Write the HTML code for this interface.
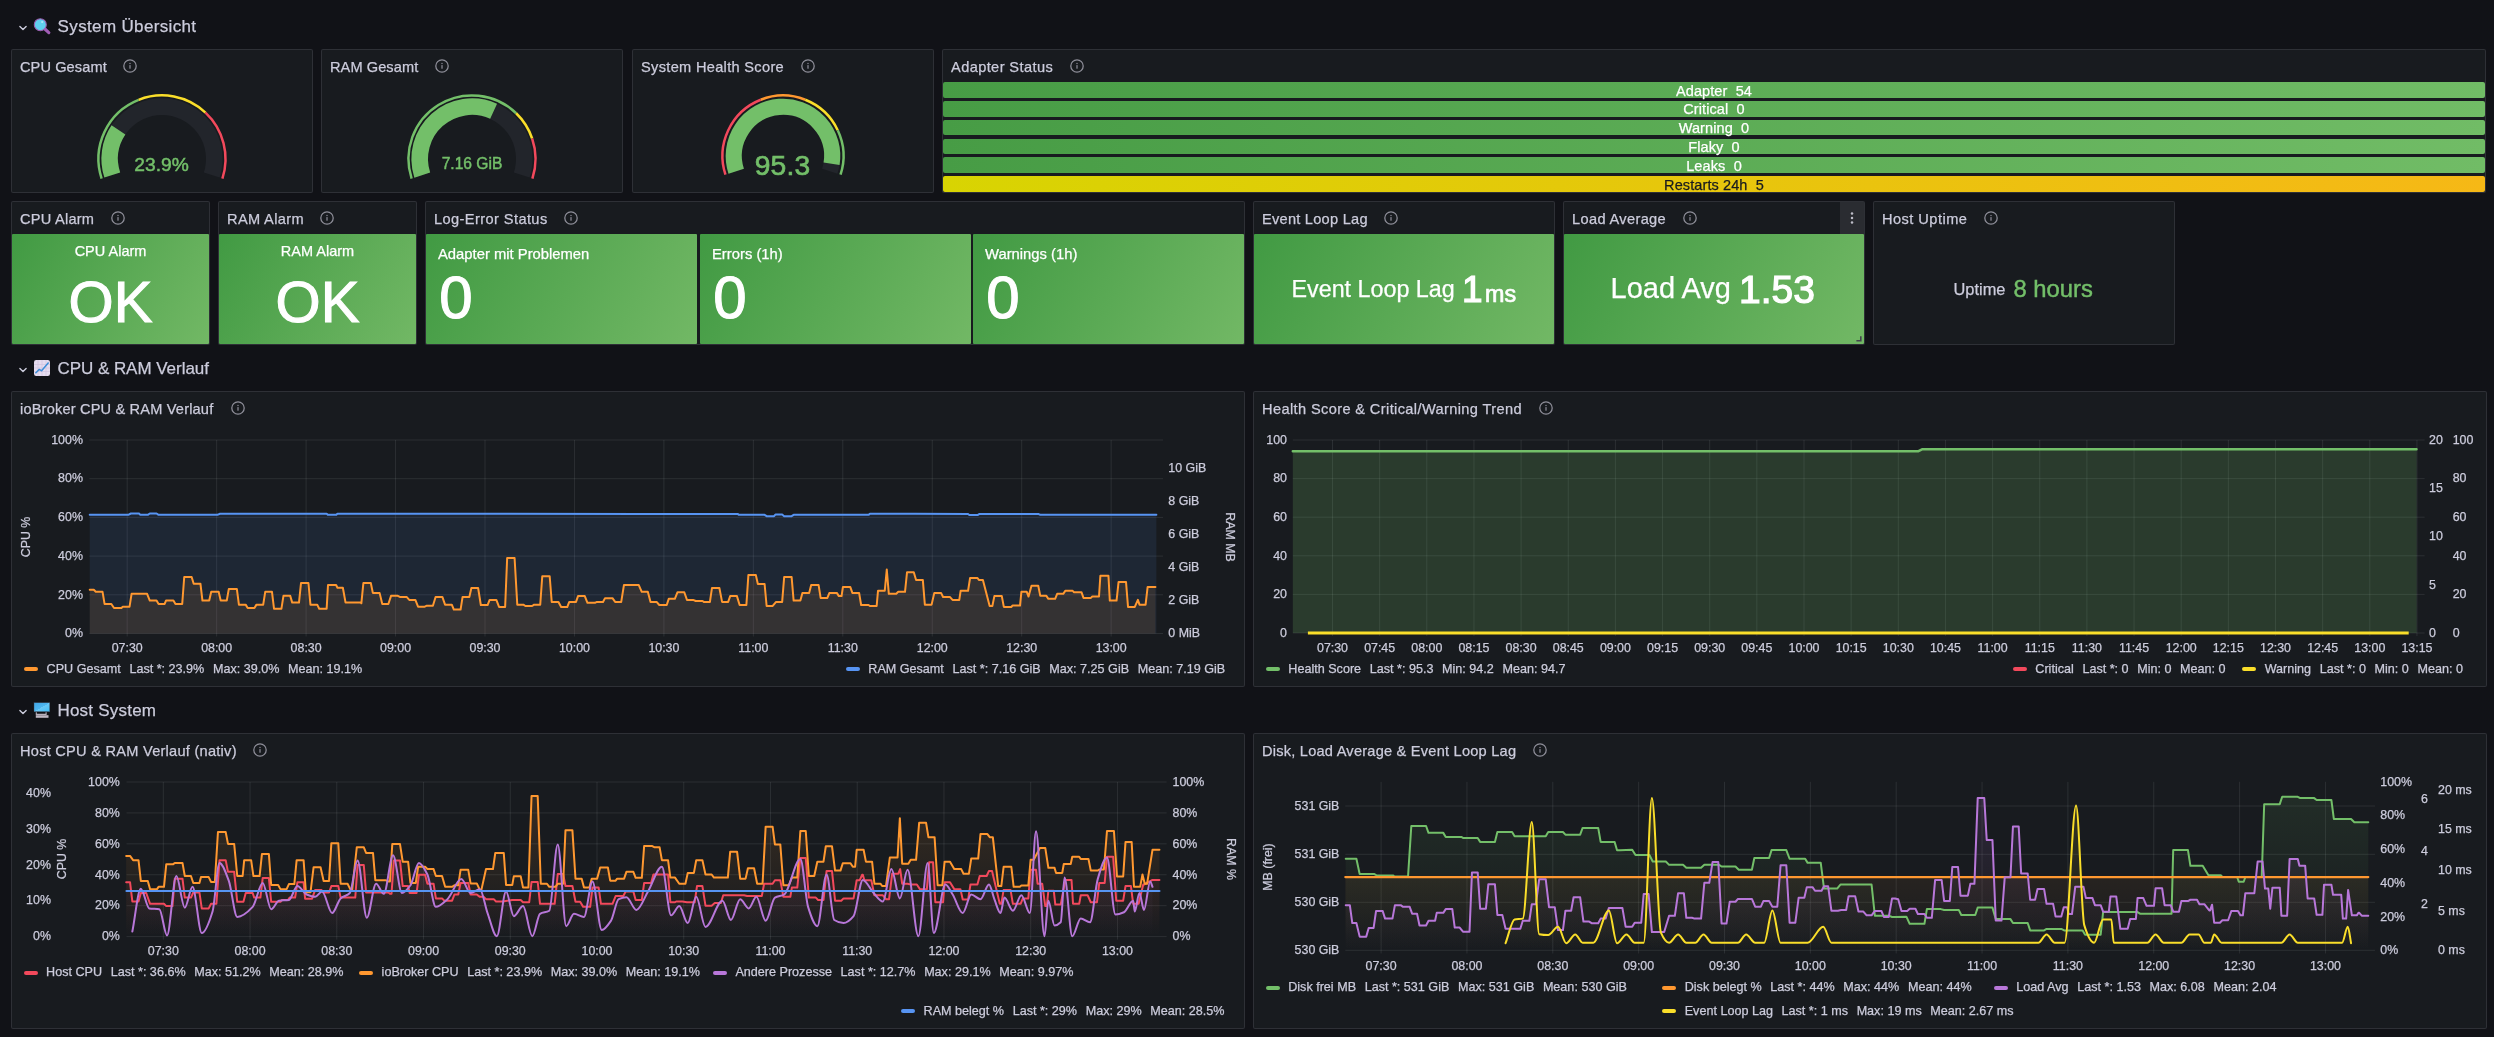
<!DOCTYPE html><html><head><meta charset="utf-8"><style>html,body{margin:0;padding:0}body{background:#111217;width:2494px;height:1037px;overflow:hidden;position:relative;font-family:"Liberation Sans",sans-serif}.t{position:absolute;white-space:pre;line-height:1;-webkit-text-stroke-width:0.25px}#root{position:absolute;left:0;top:0;width:2494px;height:1037px;will-change:transform}.a{position:absolute}.panel{position:absolute;box-sizing:border-box;background:#181b1f;border:1px solid rgba(204,204,220,0.12);border-radius:2px}</style></head><body><div id="root"><svg class="a" style="left:17px;top:22.6px" width="12" height="10" viewBox="0 0 12 10"><path d="M2.9 3.4 L6 6.5 L9.1 3.4" fill="none" stroke="#ccccdc" stroke-width="1.4" stroke-linecap="round" stroke-linejoin="round"/></svg><svg class="a" style="left:32px;top:17px" width="20" height="18" viewBox="0 0 20 18"><line x1="12.6" y1="11.8" x2="16.8" y2="15.6" stroke="#a05cb5" stroke-width="3.2" stroke-linecap="round"/><circle cx="8.3" cy="7.7" r="6.0" fill="#5fcfee" stroke="#9b5fb0" stroke-width="1.1"/><ellipse cx="10.2" cy="5.0" rx="1.2" ry="0.8" fill="#c9f1ff"/></svg><div class="t" style="top:17.91px;font-size:17px;color:#ccccdc;letter-spacing:0.353px;left:57.60px;">System Übersicht</div><svg class="a" style="left:17px;top:364.8px" width="12" height="10" viewBox="0 0 12 10"><path d="M2.9 3.4 L6 6.5 L9.1 3.4" fill="none" stroke="#ccccdc" stroke-width="1.4" stroke-linecap="round" stroke-linejoin="round"/></svg><svg class="a" style="left:33px;top:359px" width="18" height="18" viewBox="0 0 18 18"><rect x="1" y="1" width="16" height="16" rx="2.2" fill="#e6dcef"/><path d="M1 5.5H17M1 9H17M1 12.5H17M5 1V17M9 1V17M13 1V17" stroke="#cdbfdc" stroke-width="0.6"/><path d="M2.4 14.2 L6.3 10.4 L8.6 11.8 L15.6 3.6" fill="none" stroke="#3e8ed8" stroke-width="1.5" stroke-linejoin="round"/></svg><div class="t" style="top:360.11px;font-size:17px;color:#ccccdc;letter-spacing:-0.032px;left:57.40px;">CPU &amp; RAM Verlauf</div><svg class="a" style="left:17px;top:706.8px" width="12" height="10" viewBox="0 0 12 10"><path d="M2.9 3.4 L6 6.5 L9.1 3.4" fill="none" stroke="#ccccdc" stroke-width="1.4" stroke-linecap="round" stroke-linejoin="round"/></svg><svg class="a" style="left:33px;top:701px" width="18" height="18" viewBox="0 0 18 18"><defs><linearGradient id="scr" x1="0" y1="0" x2="1" y2="1"><stop offset="0" stop-color="#41a6e6"/><stop offset="0.5" stop-color="#4db6f0"/><stop offset="0.5" stop-color="#6cc8f6"/><stop offset="1" stop-color="#3ec0fa"/></linearGradient></defs><rect x="1" y="1.7" width="15.8" height="9" fill="url(#scr)" stroke="#40404c" stroke-width="0.4"/><path d="M3.3 11.3 V13.4 H13.1 V11.3" fill="none" stroke="#b8b0bc" stroke-width="1.1"/><rect x="2.8" y="14.2" width="12.7" height="2.6" fill="#bfb7c3"/></svg><div class="t" style="top:702.11px;font-size:17px;color:#ccccdc;letter-spacing:0.224px;left:57.40px;">Host System</div><div class="panel" style="left:11px;top:49px;width:302px;height:144px"></div><div class="t" style="top:59.64px;font-size:14.6px;color:#ccccdc;letter-spacing:0.081px;left:20.00px;">CPU Gesamt</div><svg class="a" style="left:122.0px;top:58.0px" width="16" height="16" viewBox="0 0 16 16"><circle cx="8" cy="8" r="6.2" fill="none" stroke="#8f8f9a" stroke-width="1.25"/><rect x="7.4" y="7.1" width="1.2" height="3.6" fill="#8f8f9a"/><rect x="7.4" y="4.9" width="1.2" height="1.2" fill="#8f8f9a"/></svg><div class="panel" style="left:321px;top:49px;width:302px;height:144px"></div><div class="t" style="top:59.64px;font-size:14.6px;color:#ccccdc;letter-spacing:0.069px;left:330.00px;">RAM Gesamt</div><svg class="a" style="left:433.6px;top:58.0px" width="16" height="16" viewBox="0 0 16 16"><circle cx="8" cy="8" r="6.2" fill="none" stroke="#8f8f9a" stroke-width="1.25"/><rect x="7.4" y="7.1" width="1.2" height="3.6" fill="#8f8f9a"/><rect x="7.4" y="4.9" width="1.2" height="1.2" fill="#8f8f9a"/></svg><div class="panel" style="left:632px;top:49px;width:302px;height:144px"></div><div class="t" style="top:59.64px;font-size:14.6px;color:#ccccdc;letter-spacing:0.312px;left:641.00px;">System Health Score</div><svg class="a" style="left:800.0px;top:58.0px" width="16" height="16" viewBox="0 0 16 16"><circle cx="8" cy="8" r="6.2" fill="none" stroke="#8f8f9a" stroke-width="1.25"/><rect x="7.4" y="7.1" width="1.2" height="3.6" fill="#8f8f9a"/><rect x="7.4" y="4.9" width="1.2" height="1.2" fill="#8f8f9a"/></svg><div class="panel" style="left:942px;top:49px;width:1544px;height:144px"></div><div class="t" style="top:59.64px;font-size:14.6px;color:#ccccdc;letter-spacing:0.396px;left:951.00px;">Adapter Status</div><svg class="a" style="left:1069.0px;top:58.0px" width="16" height="16" viewBox="0 0 16 16"><circle cx="8" cy="8" r="6.2" fill="none" stroke="#8f8f9a" stroke-width="1.25"/><rect x="7.4" y="7.1" width="1.2" height="3.6" fill="#8f8f9a"/><rect x="7.4" y="4.9" width="1.2" height="1.2" fill="#8f8f9a"/></svg><svg class="a" style="left:0;top:0" width="2494" height="300"><path d="M112.26 175.06 A52.3 52.3 0 1 1 211.74 175.06" fill="none" stroke="#22252b" stroke-width="16.6"/><path d="M112.26 175.06 A52.3 52.3 0 0 1 118.45 129.94" fill="none" stroke="#73bf69" stroke-width="16.6"/><path d="M101.61 178.52 A63.5 63.5 0 0 1 138.62 99.86" fill="none" stroke="#73bf69" stroke-width="2.5"/><path d="M138.62 99.86 A63.5 63.5 0 0 1 205.47 112.61" fill="none" stroke="#fade2a" stroke-width="2.5"/><path d="M205.47 112.61 A63.5 63.5 0 0 1 222.39 178.52" fill="none" stroke="#f2495c" stroke-width="2.5"/></svg><div class="t" style="top:154.74px;font-size:19.2px;color:#73bf69;left:-438.50px;width:1200px;text-align:center;-webkit-text-stroke-width:0.5px;">23.9%</div><svg class="a" style="left:0;top:0" width="2494" height="300"><path d="M422.26 175.06 A52.3 52.3 0 1 1 521.74 175.06" fill="none" stroke="#22252b" stroke-width="16.6"/><path d="M422.26 175.06 A52.3 52.3 0 0 1 493.61 111.27" fill="none" stroke="#73bf69" stroke-width="16.6"/><path d="M411.61 178.52 A63.5 63.5 0 0 1 516.16 113.27" fill="none" stroke="#73bf69" stroke-width="2.5"/><path d="M516.16 113.27 A63.5 63.5 0 0 1 532.14 138.52" fill="none" stroke="#fade2a" stroke-width="2.5"/><path d="M532.14 138.52 A63.5 63.5 0 0 1 532.39 178.52" fill="none" stroke="#f2495c" stroke-width="2.5"/></svg><div class="t" style="top:155.59px;font-size:15.6px;color:#73bf69;left:-128.00px;width:1200px;text-align:center;-webkit-text-stroke-width:0.45px;">7.16 GiB</div><svg class="a" style="left:0;top:0" width="2494" height="300"><path d="M736.21 171.20 A49.2 49.2 0 1 1 829.79 171.20" fill="none" stroke="#22252b" stroke-width="16.199999999999996"/><path d="M736.21 171.20 A49.2 49.2 0 1 1 831.57 163.82" fill="none" stroke="#73bf69" stroke-width="16.199999999999996"/><path d="M725.46 174.70 A60.5 60.5 0 0 1 760.73 99.75" fill="none" stroke="#f2495c" stroke-width="2.5"/><path d="M760.73 99.75 A60.5 60.5 0 0 1 805.27 99.75" fill="none" stroke="#ff9830" stroke-width="2.5"/><path d="M805.27 99.75 A60.5 60.5 0 0 1 837.74 130.24" fill="none" stroke="#fade2a" stroke-width="2.5"/><path d="M837.74 130.24 A60.5 60.5 0 0 1 840.54 174.70" fill="none" stroke="#73bf69" stroke-width="2.5"/></svg><div class="t" style="top:150.72px;font-size:28.2px;color:#73bf69;letter-spacing:0.200px;left:182.50px;width:1200px;text-align:center;-webkit-text-stroke-width:0.7px;">95.3</div><div class="a" style="left:943px;top:82.00px;width:1542px;height:15.8px;border-radius:2px;background:linear-gradient(90deg,#479c45,#71bc66)"></div><div class="t" style="top:83.62px;font-size:14.5px;color:#ffffff;letter-spacing:0.100px;left:1114.00px;width:1200px;text-align:center;">Adapter  54</div><div class="a" style="left:943px;top:100.84px;width:1542px;height:15.8px;border-radius:2px;background:linear-gradient(90deg,#479c45,#71bc66)"></div><div class="t" style="top:102.46px;font-size:14.5px;color:#ffffff;letter-spacing:0.100px;left:1114.00px;width:1200px;text-align:center;">Critical  0</div><div class="a" style="left:943px;top:119.68px;width:1542px;height:15.8px;border-radius:2px;background:linear-gradient(90deg,#479c45,#71bc66)"></div><div class="t" style="top:121.30px;font-size:14.5px;color:#ffffff;letter-spacing:0.100px;left:1114.00px;width:1200px;text-align:center;">Warning  0</div><div class="a" style="left:943px;top:138.52px;width:1542px;height:15.8px;border-radius:2px;background:linear-gradient(90deg,#479c45,#71bc66)"></div><div class="t" style="top:140.14px;font-size:14.5px;color:#ffffff;letter-spacing:0.100px;left:1114.00px;width:1200px;text-align:center;">Flaky  0</div><div class="a" style="left:943px;top:157.36px;width:1542px;height:15.8px;border-radius:2px;background:linear-gradient(90deg,#479c45,#71bc66)"></div><div class="t" style="top:158.98px;font-size:14.5px;color:#ffffff;letter-spacing:0.100px;left:1114.00px;width:1200px;text-align:center;">Leaks  0</div><div class="a" style="left:943px;top:176.20px;width:1542px;height:15.8px;border-radius:2px;background:linear-gradient(90deg,#d8d402,#f6b816)"></div><div class="t" style="top:177.82px;font-size:14.5px;color:#181b1f;letter-spacing:0.100px;left:1114.00px;width:1200px;text-align:center;">Restarts 24h  5</div><div class="panel" style="left:11px;top:201px;width:199px;height:144px"></div><div class="t" style="top:211.64px;font-size:14.6px;color:#ccccdc;letter-spacing:0.229px;left:20.00px;">CPU Alarm</div><svg class="a" style="left:109.9px;top:210.0px" width="16" height="16" viewBox="0 0 16 16"><circle cx="8" cy="8" r="6.2" fill="none" stroke="#8f8f9a" stroke-width="1.25"/><rect x="7.4" y="7.1" width="1.2" height="3.6" fill="#8f8f9a"/><rect x="7.4" y="4.9" width="1.2" height="1.2" fill="#8f8f9a"/></svg><div class="a" style="left:12px;top:234px;width:197px;height:110px;border-radius:1px;background:linear-gradient(120deg,#419a43,#72b865)"></div><div class="t" style="top:243.62px;font-size:14.5px;color:#ffffff;left:-489.50px;width:1200px;text-align:center;">CPU Alarm</div><div class="t" style="top:272.89px;font-size:58px;color:#ffffff;left:-489.50px;width:1200px;text-align:center;-webkit-text-stroke-width:1.1px;">OK</div><div class="panel" style="left:218px;top:201px;width:199px;height:144px"></div><div class="t" style="top:211.64px;font-size:14.6px;color:#ccccdc;letter-spacing:0.350px;left:227.00px;">RAM Alarm</div><svg class="a" style="left:319.0px;top:210.0px" width="16" height="16" viewBox="0 0 16 16"><circle cx="8" cy="8" r="6.2" fill="none" stroke="#8f8f9a" stroke-width="1.25"/><rect x="7.4" y="7.1" width="1.2" height="3.6" fill="#8f8f9a"/><rect x="7.4" y="4.9" width="1.2" height="1.2" fill="#8f8f9a"/></svg><div class="a" style="left:219px;top:234px;width:197px;height:110px;border-radius:1px;background:linear-gradient(120deg,#419a43,#72b865)"></div><div class="t" style="top:243.62px;font-size:14.5px;color:#ffffff;left:-282.50px;width:1200px;text-align:center;">RAM Alarm</div><div class="t" style="top:272.89px;font-size:58px;color:#ffffff;left:-282.50px;width:1200px;text-align:center;-webkit-text-stroke-width:1.1px;">OK</div><div class="panel" style="left:425px;top:201px;width:820px;height:144px"></div><div class="t" style="top:211.64px;font-size:14.6px;color:#ccccdc;letter-spacing:0.408px;left:434.00px;">Log-Error Status</div><svg class="a" style="left:562.7px;top:210.0px" width="16" height="16" viewBox="0 0 16 16"><circle cx="8" cy="8" r="6.2" fill="none" stroke="#8f8f9a" stroke-width="1.25"/><rect x="7.4" y="7.1" width="1.2" height="3.6" fill="#8f8f9a"/><rect x="7.4" y="4.9" width="1.2" height="1.2" fill="#8f8f9a"/></svg><div class="a" style="left:426px;top:234px;width:270.5px;height:110px;border-radius:1px;background:linear-gradient(120deg,#419a43,#72b865)"></div><div class="t" style="top:247.47px;font-size:14.8px;color:#ffffff;left:438.00px;">Adapter mit Problemen</div><div class="t" style="top:267.50px;font-size:60px;color:#ffffff;left:439.30px;-webkit-text-stroke-width:1.1px;">0</div><div class="a" style="left:700px;top:234px;width:270.5px;height:110px;border-radius:1px;background:linear-gradient(120deg,#419a43,#72b865)"></div><div class="t" style="top:247.47px;font-size:14.8px;color:#ffffff;left:712.00px;">Errors (1h)</div><div class="t" style="top:267.50px;font-size:60px;color:#ffffff;left:713.30px;-webkit-text-stroke-width:1.1px;">0</div><div class="a" style="left:973px;top:234px;width:270.5px;height:110px;border-radius:1px;background:linear-gradient(120deg,#419a43,#72b865)"></div><div class="t" style="top:247.47px;font-size:14.8px;color:#ffffff;left:985.00px;">Warnings (1h)</div><div class="t" style="top:267.50px;font-size:60px;color:#ffffff;left:986.30px;-webkit-text-stroke-width:1.1px;">0</div><div class="panel" style="left:1253px;top:201px;width:302px;height:144px"></div><div class="t" style="top:211.64px;font-size:14.6px;color:#ccccdc;letter-spacing:0.250px;left:1262.00px;">Event Loop Lag</div><svg class="a" style="left:1382.9px;top:210.0px" width="16" height="16" viewBox="0 0 16 16"><circle cx="8" cy="8" r="6.2" fill="none" stroke="#8f8f9a" stroke-width="1.25"/><rect x="7.4" y="7.1" width="1.2" height="3.6" fill="#8f8f9a"/><rect x="7.4" y="4.9" width="1.2" height="1.2" fill="#8f8f9a"/></svg><div class="a" style="left:1254px;top:234px;width:300px;height:110px;border-radius:1px;background:linear-gradient(120deg,#419a43,#72b865)"></div><div class="t" style="top:277.87px;font-size:23.3px;color:#ffffff;left:1291.50px;">Event Loop Lag</div><div class="t" style="top:271.47px;font-size:37px;color:#ffffff;left:1462.00px;-webkit-text-stroke-width:1.2px;">1</div><div class="t" style="top:283.07px;font-size:23.3px;color:#ffffff;left:1485.00px;-webkit-text-stroke-width:0.7px;">ms</div><div class="panel" style="left:1563px;top:201px;width:302px;height:144px"></div><div class="t" style="top:211.64px;font-size:14.6px;color:#ccccdc;letter-spacing:0.353px;left:1572.00px;">Load Average</div><svg class="a" style="left:1681.8px;top:210.0px" width="16" height="16" viewBox="0 0 16 16"><circle cx="8" cy="8" r="6.2" fill="none" stroke="#8f8f9a" stroke-width="1.25"/><rect x="7.4" y="7.1" width="1.2" height="3.6" fill="#8f8f9a"/><rect x="7.4" y="4.9" width="1.2" height="1.2" fill="#8f8f9a"/></svg><div class="a" style="left:1564px;top:234px;width:300px;height:110px;border-radius:1px;background:linear-gradient(120deg,#419a43,#72b865)"></div><div class="t" style="top:274.45px;font-size:29px;color:#ffffff;left:1610.50px;">Load Avg</div><div class="t" style="top:269.78px;font-size:39px;color:#ffffff;left:1739.00px;-webkit-text-stroke-width:1.2px;">1.53</div><div class="a" style="left:1840px;top:202px;width:24px;height:32px;background:#2a2c31"></div><svg class="a" style="left:1846px;top:210px" width="12" height="16" viewBox="0 0 12 16"><circle cx="6" cy="3.4" r="1.25" fill="#bdbdc8"/><circle cx="6" cy="8" r="1.25" fill="#bdbdc8"/><circle cx="6" cy="12.6" r="1.25" fill="#bdbdc8"/></svg><svg class="a" style="left:1855px;top:335px" width="8" height="8" viewBox="0 0 8 8"><path d="M5.8 1.2V5.7H1.4" fill="none" stroke="#44444e" stroke-width="1.6"/></svg><div class="panel" style="left:1873px;top:201px;width:302px;height:144px"></div><div class="t" style="top:211.64px;font-size:14.6px;color:#ccccdc;letter-spacing:0.460px;left:1882.00px;">Host Uptime</div><svg class="a" style="left:1982.8px;top:210.0px" width="16" height="16" viewBox="0 0 16 16"><circle cx="8" cy="8" r="6.2" fill="none" stroke="#8f8f9a" stroke-width="1.25"/><rect x="7.4" y="7.1" width="1.2" height="3.6" fill="#8f8f9a"/><rect x="7.4" y="4.9" width="1.2" height="1.2" fill="#8f8f9a"/></svg><div class="t" style="top:280.91px;font-size:16.4px;color:#ccccdc;left:1953.50px;">Uptime</div><div class="t" style="top:277.25px;font-size:23.8px;color:#73bf69;left:2013.50px;-webkit-text-stroke-width:0.45px;">8 hours</div><div class="panel" style="left:11px;top:391px;width:1234px;height:296px"></div><div class="t" style="top:401.64px;font-size:14.6px;color:#ccccdc;letter-spacing:0.169px;left:20.00px;">ioBroker CPU &amp; RAM Verlauf</div><svg class="a" style="left:229.7px;top:400.0px" width="16" height="16" viewBox="0 0 16 16"><circle cx="8" cy="8" r="6.2" fill="none" stroke="#8f8f9a" stroke-width="1.25"/><rect x="7.4" y="7.1" width="1.2" height="3.6" fill="#8f8f9a"/><rect x="7.4" y="4.9" width="1.2" height="1.2" fill="#8f8f9a"/></svg><svg class="a" style="left:0px;top:380px;overflow:visible" width="1250" height="300" viewBox="0 380 1250 300"><defs></defs><line x1="89.4" y1="633.50" x2="1163.0" y2="633.50" stroke="rgba(240,250,255,0.09)" stroke-width="1"/><line x1="89.4" y1="594.80" x2="1163.0" y2="594.80" stroke="rgba(240,250,255,0.09)" stroke-width="1"/><line x1="89.4" y1="556.10" x2="1163.0" y2="556.10" stroke="rgba(240,250,255,0.09)" stroke-width="1"/><line x1="89.4" y1="517.40" x2="1163.0" y2="517.40" stroke="rgba(240,250,255,0.09)" stroke-width="1"/><line x1="89.4" y1="478.70" x2="1163.0" y2="478.70" stroke="rgba(240,250,255,0.09)" stroke-width="1"/><line x1="89.4" y1="440.00" x2="1163.0" y2="440.00" stroke="rgba(240,250,255,0.09)" stroke-width="1"/><line x1="127.20" y1="440.0" x2="127.20" y2="636.5" stroke="rgba(240,250,255,0.09)" stroke-width="1"/><line x1="216.65" y1="440.0" x2="216.65" y2="636.5" stroke="rgba(240,250,255,0.09)" stroke-width="1"/><line x1="306.10" y1="440.0" x2="306.10" y2="636.5" stroke="rgba(240,250,255,0.09)" stroke-width="1"/><line x1="395.55" y1="440.0" x2="395.55" y2="636.5" stroke="rgba(240,250,255,0.09)" stroke-width="1"/><line x1="485.00" y1="440.0" x2="485.00" y2="636.5" stroke="rgba(240,250,255,0.09)" stroke-width="1"/><line x1="574.45" y1="440.0" x2="574.45" y2="636.5" stroke="rgba(240,250,255,0.09)" stroke-width="1"/><line x1="663.90" y1="440.0" x2="663.90" y2="636.5" stroke="rgba(240,250,255,0.09)" stroke-width="1"/><line x1="753.35" y1="440.0" x2="753.35" y2="636.5" stroke="rgba(240,250,255,0.09)" stroke-width="1"/><line x1="842.80" y1="440.0" x2="842.80" y2="636.5" stroke="rgba(240,250,255,0.09)" stroke-width="1"/><line x1="932.25" y1="440.0" x2="932.25" y2="636.5" stroke="rgba(240,250,255,0.09)" stroke-width="1"/><line x1="1021.70" y1="440.0" x2="1021.70" y2="636.5" stroke="rgba(240,250,255,0.09)" stroke-width="1"/><line x1="1111.15" y1="440.0" x2="1111.15" y2="636.5" stroke="rgba(240,250,255,0.09)" stroke-width="1"/><path d="M89.73 514.85 L128.20 514.85 L130.90 513.50 L139.00 513.50 L140.35 514.85 L147.78 514.85 L149.80 513.50 L156.55 513.50 L158.58 514.85 L217.30 514.85 L220.00 513.77 L326.66 513.77 L328.01 514.85 L336.11 514.85 L337.46 513.77 L365.00 513.77 L640.00 513.91 L737.60 513.91 L738.95 514.85 L764.60 514.85 L766.63 516.20 L774.05 516.20 L775.41 514.58 L782.16 514.58 L784.18 516.20 L791.61 516.20 L793.63 514.85 L868.56 514.85 L869.91 513.77 L915.00 513.77 L968.05 513.91 L969.40 515.12 L977.50 515.12 L979.53 513.91 L1038.25 513.91 L1040.28 514.85 L1156.38 514.85 L1156.38 633.5 L89.73 633.5 Z" fill="rgba(87,148,242,0.10)" stroke="none"/><path d="M89.73 589.78 L93.78 589.78 L95.80 591.80 L102.55 591.80 L104.58 603.95 L111.33 603.95 L114.03 608.00 L121.45 608.00 L122.80 606.65 L129.55 606.65 L131.58 593.83 L147.10 593.83 L149.80 600.58 L156.55 600.58 L158.58 603.95 L164.65 603.95 L166.00 600.58 L173.43 600.58 L175.45 603.95 L182.20 603.95 L184.23 576.95 L191.65 576.95 L193.68 583.70 L200.43 583.70 L202.45 600.58 L209.20 600.58 L211.23 591.80 L218.65 591.80 L220.68 600.58 L226.76 600.58 L228.78 589.10 L236.88 589.10 L238.91 604.63 L245.66 604.63 L247.68 608.00 L254.43 608.00 L256.46 604.63 L263.21 604.63 L265.23 591.80 L271.98 591.80 L274.01 608.68 L281.43 608.68 L283.46 595.85 L290.21 595.85 L292.23 602.60 L298.98 602.60 L301.01 583.03 L308.43 583.03 L310.46 604.63 L317.21 604.63 L319.23 608.68 L326.66 608.68 L328.01 585.05 L336.11 585.05 L337.46 587.75 L342.86 587.75 L345.56 602.60 L361.08 602.60 L361.35 603.28 L363.38 583.03 L370.80 583.03 L372.83 592.88 L379.58 592.88 L382.28 603.95 L388.35 603.95 L391.05 595.85 L397.80 595.85 L399.83 596.93 L406.58 596.93 L409.28 599.90 L415.35 599.90 L418.05 606.65 L424.80 606.65 L426.83 605.71 L432.90 605.71 L435.60 596.93 L442.35 596.93 L445.05 604.63 L451.80 604.63 L453.83 609.62 L460.58 609.62 L462.60 596.93 L469.35 596.93 L471.38 588.02 L478.13 588.02 L480.83 605.03 L487.58 605.03 L489.60 599.90 L496.35 599.90 L499.05 606.92 L505.13 606.92 L507.16 558.05 L514.58 558.05 L517.28 604.63 L523.36 604.63 L525.38 605.98 L532.13 605.98 L534.16 604.63 L540.23 604.63 L542.26 576.28 L549.68 576.28 L551.71 601.93 L558.46 601.93 L561.16 607.06 L567.23 607.06 L569.26 601.93 L576.01 601.93 L578.03 596.12 L584.78 596.12 L587.48 602.87 L594.91 602.87 L596.93 601.93 L603.01 601.93 L605.03 598.15 L612.46 598.15 L615.16 601.93 L621.23 601.93 L623.93 585.05 L638.78 585.05 L641.75 591.80 L647.83 591.80 L650.53 601.93 L656.60 601.93 L659.30 605.03 L666.73 605.03 L668.75 598.82 L674.83 598.82 L677.53 592.21 L684.28 592.21 L686.98 599.90 L693.05 599.90 L695.75 600.98 L702.50 600.98 L703.85 601.93 L709.93 601.93 L711.95 588.02 L719.38 588.02 L722.08 601.93 L728.15 601.93 L730.18 596.12 L736.93 596.12 L739.63 605.03 L746.38 605.03 L748.40 574.93 L755.83 574.93 L757.85 583.97 L764.60 583.97 L766.63 605.98 L772.70 605.98 L776.08 601.93 L782.16 601.93 L784.18 576.95 L791.61 576.95 L793.63 600.58 L800.38 600.58 L802.41 592.88 L809.16 592.88 L811.18 585.05 L818.61 585.05 L820.63 597.88 L827.38 597.88 L829.41 592.88 L836.83 592.88 L838.86 596.12 L841.56 596.12 L842.91 587.08 L850.33 587.08 L852.36 592.88 L859.11 592.88 L861.13 605.03 L868.56 605.03 L869.91 605.98 L876.66 605.98 L878.01 590.72 L884.76 590.72 L886.78 569.53 L888.81 593.83 L896.23 593.83 L898.26 591.80 L905.01 591.80 L907.03 572.23 L913.78 572.23 L916.08 579.92 L922.83 579.92 L924.85 604.63 L931.60 604.63 L934.30 592.88 L941.05 592.88 L943.08 596.93 L949.83 596.93 L952.53 599.90 L959.28 599.90 L960.63 590.86 L968.05 590.86 L970.08 578.03 L977.50 578.03 L978.85 579.92 L982.90 579.92 L989.65 605.98 L992.35 605.98 L994.38 596.12 L1001.80 596.12 L1003.83 606.92 L1011.25 606.92 L1012.60 605.57 L1020.03 605.57 L1021.38 591.80 L1026.78 591.80 L1028.53 596.53 L1031.50 585.73 L1038.25 585.73 L1040.28 595.85 L1046.35 595.85 L1048.38 598.82 L1055.13 598.82 L1057.16 593.83 L1063.23 593.83 L1065.26 590.86 L1072.68 590.86 L1074.03 592.21 L1081.46 592.21 L1083.48 597.88 L1090.91 597.88 L1092.26 596.53 L1099.01 596.53 L1100.36 575.87 L1108.46 575.87 L1109.81 600.58 L1116.56 600.58 L1118.58 581.95 L1126.01 581.95 L1128.03 606.92 L1134.78 606.92 L1137.89 599.90 L1139.51 604.63 L1145.58 604.63 L1147.61 587.08 L1155.44 587.08 L1155.44 633.5 L89.73 633.5 Z" fill="rgba(255,152,48,0.10)" stroke="none"/><path d="M89.73 514.85 L128.20 514.85 L130.90 513.50 L139.00 513.50 L140.35 514.85 L147.78 514.85 L149.80 513.50 L156.55 513.50 L158.58 514.85 L217.30 514.85 L220.00 513.77 L326.66 513.77 L328.01 514.85 L336.11 514.85 L337.46 513.77 L365.00 513.77 L640.00 513.91 L737.60 513.91 L738.95 514.85 L764.60 514.85 L766.63 516.20 L774.05 516.20 L775.41 514.58 L782.16 514.58 L784.18 516.20 L791.61 516.20 L793.63 514.85 L868.56 514.85 L869.91 513.77 L915.00 513.77 L968.05 513.91 L969.40 515.12 L977.50 515.12 L979.53 513.91 L1038.25 513.91 L1040.28 514.85 L1156.38 514.85" fill="none" stroke="#5794f2" stroke-width="2" stroke-linejoin="round" stroke-linecap="round"/><path d="M89.73 589.78 L93.78 589.78 L95.80 591.80 L102.55 591.80 L104.58 603.95 L111.33 603.95 L114.03 608.00 L121.45 608.00 L122.80 606.65 L129.55 606.65 L131.58 593.83 L147.10 593.83 L149.80 600.58 L156.55 600.58 L158.58 603.95 L164.65 603.95 L166.00 600.58 L173.43 600.58 L175.45 603.95 L182.20 603.95 L184.23 576.95 L191.65 576.95 L193.68 583.70 L200.43 583.70 L202.45 600.58 L209.20 600.58 L211.23 591.80 L218.65 591.80 L220.68 600.58 L226.76 600.58 L228.78 589.10 L236.88 589.10 L238.91 604.63 L245.66 604.63 L247.68 608.00 L254.43 608.00 L256.46 604.63 L263.21 604.63 L265.23 591.80 L271.98 591.80 L274.01 608.68 L281.43 608.68 L283.46 595.85 L290.21 595.85 L292.23 602.60 L298.98 602.60 L301.01 583.03 L308.43 583.03 L310.46 604.63 L317.21 604.63 L319.23 608.68 L326.66 608.68 L328.01 585.05 L336.11 585.05 L337.46 587.75 L342.86 587.75 L345.56 602.60 L361.08 602.60 L361.35 603.28 L363.38 583.03 L370.80 583.03 L372.83 592.88 L379.58 592.88 L382.28 603.95 L388.35 603.95 L391.05 595.85 L397.80 595.85 L399.83 596.93 L406.58 596.93 L409.28 599.90 L415.35 599.90 L418.05 606.65 L424.80 606.65 L426.83 605.71 L432.90 605.71 L435.60 596.93 L442.35 596.93 L445.05 604.63 L451.80 604.63 L453.83 609.62 L460.58 609.62 L462.60 596.93 L469.35 596.93 L471.38 588.02 L478.13 588.02 L480.83 605.03 L487.58 605.03 L489.60 599.90 L496.35 599.90 L499.05 606.92 L505.13 606.92 L507.16 558.05 L514.58 558.05 L517.28 604.63 L523.36 604.63 L525.38 605.98 L532.13 605.98 L534.16 604.63 L540.23 604.63 L542.26 576.28 L549.68 576.28 L551.71 601.93 L558.46 601.93 L561.16 607.06 L567.23 607.06 L569.26 601.93 L576.01 601.93 L578.03 596.12 L584.78 596.12 L587.48 602.87 L594.91 602.87 L596.93 601.93 L603.01 601.93 L605.03 598.15 L612.46 598.15 L615.16 601.93 L621.23 601.93 L623.93 585.05 L638.78 585.05 L641.75 591.80 L647.83 591.80 L650.53 601.93 L656.60 601.93 L659.30 605.03 L666.73 605.03 L668.75 598.82 L674.83 598.82 L677.53 592.21 L684.28 592.21 L686.98 599.90 L693.05 599.90 L695.75 600.98 L702.50 600.98 L703.85 601.93 L709.93 601.93 L711.95 588.02 L719.38 588.02 L722.08 601.93 L728.15 601.93 L730.18 596.12 L736.93 596.12 L739.63 605.03 L746.38 605.03 L748.40 574.93 L755.83 574.93 L757.85 583.97 L764.60 583.97 L766.63 605.98 L772.70 605.98 L776.08 601.93 L782.16 601.93 L784.18 576.95 L791.61 576.95 L793.63 600.58 L800.38 600.58 L802.41 592.88 L809.16 592.88 L811.18 585.05 L818.61 585.05 L820.63 597.88 L827.38 597.88 L829.41 592.88 L836.83 592.88 L838.86 596.12 L841.56 596.12 L842.91 587.08 L850.33 587.08 L852.36 592.88 L859.11 592.88 L861.13 605.03 L868.56 605.03 L869.91 605.98 L876.66 605.98 L878.01 590.72 L884.76 590.72 L886.78 569.53 L888.81 593.83 L896.23 593.83 L898.26 591.80 L905.01 591.80 L907.03 572.23 L913.78 572.23 L916.08 579.92 L922.83 579.92 L924.85 604.63 L931.60 604.63 L934.30 592.88 L941.05 592.88 L943.08 596.93 L949.83 596.93 L952.53 599.90 L959.28 599.90 L960.63 590.86 L968.05 590.86 L970.08 578.03 L977.50 578.03 L978.85 579.92 L982.90 579.92 L989.65 605.98 L992.35 605.98 L994.38 596.12 L1001.80 596.12 L1003.83 606.92 L1011.25 606.92 L1012.60 605.57 L1020.03 605.57 L1021.38 591.80 L1026.78 591.80 L1028.53 596.53 L1031.50 585.73 L1038.25 585.73 L1040.28 595.85 L1046.35 595.85 L1048.38 598.82 L1055.13 598.82 L1057.16 593.83 L1063.23 593.83 L1065.26 590.86 L1072.68 590.86 L1074.03 592.21 L1081.46 592.21 L1083.48 597.88 L1090.91 597.88 L1092.26 596.53 L1099.01 596.53 L1100.36 575.87 L1108.46 575.87 L1109.81 600.58 L1116.56 600.58 L1118.58 581.95 L1126.01 581.95 L1128.03 606.92 L1134.78 606.92 L1137.89 599.90 L1139.51 604.63 L1145.58 604.63 L1147.61 587.08 L1155.44 587.08" fill="none" stroke="#ff9830" stroke-width="2" stroke-linejoin="round" stroke-linecap="round"/></svg><div class="t" style="top:627.27px;font-size:12.4px;color:#ccccdc;left:-1117.10px;width:1200px;text-align:right;">0%</div><div class="t" style="top:588.57px;font-size:12.4px;color:#ccccdc;left:-1117.10px;width:1200px;text-align:right;">20%</div><div class="t" style="top:549.87px;font-size:12.4px;color:#ccccdc;left:-1117.10px;width:1200px;text-align:right;">40%</div><div class="t" style="top:511.17px;font-size:12.4px;color:#ccccdc;left:-1117.10px;width:1200px;text-align:right;">60%</div><div class="t" style="top:472.47px;font-size:12.4px;color:#ccccdc;left:-1117.10px;width:1200px;text-align:right;">80%</div><div class="t" style="top:433.77px;font-size:12.4px;color:#ccccdc;left:-1117.10px;width:1200px;text-align:right;">100%</div><div class="t" style="top:626.77px;font-size:12.4px;color:#ccccdc;left:1168.30px;">0 MiB</div><div class="t" style="top:593.77px;font-size:12.4px;color:#ccccdc;left:1168.30px;">2 GiB</div><div class="t" style="top:560.77px;font-size:12.4px;color:#ccccdc;left:1168.30px;">4 GiB</div><div class="t" style="top:527.77px;font-size:12.4px;color:#ccccdc;left:1168.30px;">6 GiB</div><div class="t" style="top:494.77px;font-size:12.4px;color:#ccccdc;left:1168.30px;">8 GiB</div><div class="t" style="top:461.77px;font-size:12.4px;color:#ccccdc;left:1168.30px;">10 GiB</div><div class="t" style="top:641.57px;font-size:12.4px;color:#ccccdc;left:-472.80px;width:1200px;text-align:center;">07:30</div><div class="t" style="top:641.57px;font-size:12.4px;color:#ccccdc;left:-383.35px;width:1200px;text-align:center;">08:00</div><div class="t" style="top:641.57px;font-size:12.4px;color:#ccccdc;left:-293.90px;width:1200px;text-align:center;">08:30</div><div class="t" style="top:641.57px;font-size:12.4px;color:#ccccdc;left:-204.45px;width:1200px;text-align:center;">09:00</div><div class="t" style="top:641.57px;font-size:12.4px;color:#ccccdc;left:-115.00px;width:1200px;text-align:center;">09:30</div><div class="t" style="top:641.57px;font-size:12.4px;color:#ccccdc;left:-25.55px;width:1200px;text-align:center;">10:00</div><div class="t" style="top:641.57px;font-size:12.4px;color:#ccccdc;left:63.90px;width:1200px;text-align:center;">10:30</div><div class="t" style="top:641.57px;font-size:12.4px;color:#ccccdc;left:153.35px;width:1200px;text-align:center;">11:00</div><div class="t" style="top:641.57px;font-size:12.4px;color:#ccccdc;left:242.80px;width:1200px;text-align:center;">11:30</div><div class="t" style="top:641.57px;font-size:12.4px;color:#ccccdc;left:332.25px;width:1200px;text-align:center;">12:00</div><div class="t" style="top:641.57px;font-size:12.4px;color:#ccccdc;left:421.70px;width:1200px;text-align:center;">12:30</div><div class="t" style="top:641.57px;font-size:12.4px;color:#ccccdc;left:511.15px;width:1200px;text-align:center;">13:00</div><div class="t" style="left:-74.4px;top:530.0px;width:200px;height:14px;line-height:14px;text-align:center;font-size:12.4px;color:#ccccdc;transform:rotate(-90deg)">CPU %</div><div class="t" style="left:1130.0px;top:530.0px;width:200px;height:14px;line-height:14px;text-align:center;font-size:12.4px;color:#ccccdc;transform:rotate(90deg)">RAM MB</div><div class="a" style="left:24.3px;top:667.0px;width:14px;height:4px;border-radius:2px;background:#ff9830"></div><div class="t" style="top:662.53px;font-size:12.6px;color:#ccccdc;left:46.60px;">CPU Gesamt</div><div class="t" style="top:662.53px;font-size:12.6px;color:#ccccdc;left:129.39px;">Last *: 23.9%</div><div class="t" style="top:662.53px;font-size:12.6px;color:#ccccdc;left:212.91px;">Max: 39.0%</div><div class="t" style="top:662.53px;font-size:12.6px;color:#ccccdc;left:288.01px;">Mean: 19.1%</div><div class="a" style="left:846.0px;top:667.0px;width:14px;height:4px;border-radius:2px;background:#5794f2"></div><div class="t" style="top:662.53px;font-size:12.6px;color:#ccccdc;left:868.29px;">RAM Gesamt</div><div class="t" style="top:662.53px;font-size:12.6px;color:#ccccdc;left:952.47px;">Last *: 7.16 GiB</div><div class="t" style="top:662.53px;font-size:12.6px;color:#ccccdc;left:1049.29px;">Max: 7.25 GiB</div><div class="t" style="top:662.53px;font-size:12.6px;color:#ccccdc;left:1137.68px;">Mean: 7.19 GiB</div><div class="panel" style="left:1253px;top:391px;width:1234px;height:296px"></div><div class="t" style="top:401.64px;font-size:14.6px;color:#ccccdc;letter-spacing:0.377px;left:1262.00px;">Health Score &amp; Critical/Warning Trend</div><svg class="a" style="left:1537.7px;top:400.0px" width="16" height="16" viewBox="0 0 16 16"><circle cx="8" cy="8" r="6.2" fill="none" stroke="#8f8f9a" stroke-width="1.25"/><rect x="7.4" y="7.1" width="1.2" height="3.6" fill="#8f8f9a"/><rect x="7.4" y="4.9" width="1.2" height="1.2" fill="#8f8f9a"/></svg><svg class="a" style="left:1250px;top:380px;overflow:visible" width="1240" height="300" viewBox="1250 380 1240 300"><defs></defs><line x1="1292.8" y1="633.00" x2="2424.6" y2="633.00" stroke="rgba(240,250,255,0.09)" stroke-width="1"/><line x1="1292.8" y1="594.40" x2="2424.6" y2="594.40" stroke="rgba(240,250,255,0.09)" stroke-width="1"/><line x1="1292.8" y1="555.80" x2="2424.6" y2="555.80" stroke="rgba(240,250,255,0.09)" stroke-width="1"/><line x1="1292.8" y1="517.20" x2="2424.6" y2="517.20" stroke="rgba(240,250,255,0.09)" stroke-width="1"/><line x1="1292.8" y1="478.60" x2="2424.6" y2="478.60" stroke="rgba(240,250,255,0.09)" stroke-width="1"/><line x1="1292.8" y1="440.00" x2="2424.6" y2="440.00" stroke="rgba(240,250,255,0.09)" stroke-width="1"/><line x1="1332.50" y1="440.0" x2="1332.50" y2="636.0" stroke="rgba(240,250,255,0.09)" stroke-width="1"/><line x1="1379.65" y1="440.0" x2="1379.65" y2="636.0" stroke="rgba(240,250,255,0.09)" stroke-width="1"/><line x1="1426.80" y1="440.0" x2="1426.80" y2="636.0" stroke="rgba(240,250,255,0.09)" stroke-width="1"/><line x1="1473.95" y1="440.0" x2="1473.95" y2="636.0" stroke="rgba(240,250,255,0.09)" stroke-width="1"/><line x1="1521.10" y1="440.0" x2="1521.10" y2="636.0" stroke="rgba(240,250,255,0.09)" stroke-width="1"/><line x1="1568.25" y1="440.0" x2="1568.25" y2="636.0" stroke="rgba(240,250,255,0.09)" stroke-width="1"/><line x1="1615.40" y1="440.0" x2="1615.40" y2="636.0" stroke="rgba(240,250,255,0.09)" stroke-width="1"/><line x1="1662.55" y1="440.0" x2="1662.55" y2="636.0" stroke="rgba(240,250,255,0.09)" stroke-width="1"/><line x1="1709.70" y1="440.0" x2="1709.70" y2="636.0" stroke="rgba(240,250,255,0.09)" stroke-width="1"/><line x1="1756.85" y1="440.0" x2="1756.85" y2="636.0" stroke="rgba(240,250,255,0.09)" stroke-width="1"/><line x1="1804.00" y1="440.0" x2="1804.00" y2="636.0" stroke="rgba(240,250,255,0.09)" stroke-width="1"/><line x1="1851.15" y1="440.0" x2="1851.15" y2="636.0" stroke="rgba(240,250,255,0.09)" stroke-width="1"/><line x1="1898.30" y1="440.0" x2="1898.30" y2="636.0" stroke="rgba(240,250,255,0.09)" stroke-width="1"/><line x1="1945.45" y1="440.0" x2="1945.45" y2="636.0" stroke="rgba(240,250,255,0.09)" stroke-width="1"/><line x1="1992.60" y1="440.0" x2="1992.60" y2="636.0" stroke="rgba(240,250,255,0.09)" stroke-width="1"/><line x1="2039.75" y1="440.0" x2="2039.75" y2="636.0" stroke="rgba(240,250,255,0.09)" stroke-width="1"/><line x1="2086.90" y1="440.0" x2="2086.90" y2="636.0" stroke="rgba(240,250,255,0.09)" stroke-width="1"/><line x1="2134.05" y1="440.0" x2="2134.05" y2="636.0" stroke="rgba(240,250,255,0.09)" stroke-width="1"/><line x1="2181.20" y1="440.0" x2="2181.20" y2="636.0" stroke="rgba(240,250,255,0.09)" stroke-width="1"/><line x1="2228.35" y1="440.0" x2="2228.35" y2="636.0" stroke="rgba(240,250,255,0.09)" stroke-width="1"/><line x1="2275.50" y1="440.0" x2="2275.50" y2="636.0" stroke="rgba(240,250,255,0.09)" stroke-width="1"/><line x1="2322.65" y1="440.0" x2="2322.65" y2="636.0" stroke="rgba(240,250,255,0.09)" stroke-width="1"/><line x1="2369.80" y1="440.0" x2="2369.80" y2="636.0" stroke="rgba(240,250,255,0.09)" stroke-width="1"/><line x1="2416.95" y1="440.0" x2="2416.95" y2="636.0" stroke="rgba(240,250,255,0.09)" stroke-width="1"/><path d="M1292.80 451.30 L1918.00 451.30 L1922.00 449.30 L2416.50 449.30 L2416.50 633.0 L1292.80 633.0 Z" fill="rgba(115,191,105,0.20)" stroke="none"/><path d="M1292.80 451.30 L1918.00 451.30 L1922.00 449.30 L2416.50 449.30" fill="none" stroke="#73bf69" stroke-width="2.5" stroke-linejoin="round" stroke-linecap="round"/><line x1="1307.9" y1="633.0" x2="2408.7" y2="633.0" stroke="#fade2a" stroke-width="3"/></svg><div class="t" style="top:626.77px;font-size:12.4px;color:#ccccdc;left:87.00px;width:1200px;text-align:right;">0</div><div class="t" style="top:626.77px;font-size:12.4px;color:#ccccdc;left:2452.70px;">0</div><div class="t" style="top:588.17px;font-size:12.4px;color:#ccccdc;left:87.00px;width:1200px;text-align:right;">20</div><div class="t" style="top:588.17px;font-size:12.4px;color:#ccccdc;left:2452.70px;">20</div><div class="t" style="top:549.57px;font-size:12.4px;color:#ccccdc;left:87.00px;width:1200px;text-align:right;">40</div><div class="t" style="top:549.57px;font-size:12.4px;color:#ccccdc;left:2452.70px;">40</div><div class="t" style="top:510.97px;font-size:12.4px;color:#ccccdc;left:87.00px;width:1200px;text-align:right;">60</div><div class="t" style="top:510.97px;font-size:12.4px;color:#ccccdc;left:2452.70px;">60</div><div class="t" style="top:472.37px;font-size:12.4px;color:#ccccdc;left:87.00px;width:1200px;text-align:right;">80</div><div class="t" style="top:472.37px;font-size:12.4px;color:#ccccdc;left:2452.70px;">80</div><div class="t" style="top:433.77px;font-size:12.4px;color:#ccccdc;left:87.00px;width:1200px;text-align:right;">100</div><div class="t" style="top:433.77px;font-size:12.4px;color:#ccccdc;left:2452.70px;">100</div><div class="t" style="top:626.77px;font-size:12.4px;color:#ccccdc;left:2429.00px;">0</div><div class="t" style="top:578.52px;font-size:12.4px;color:#ccccdc;left:2429.00px;">5</div><div class="t" style="top:530.27px;font-size:12.4px;color:#ccccdc;left:2429.00px;">10</div><div class="t" style="top:482.02px;font-size:12.4px;color:#ccccdc;left:2429.00px;">15</div><div class="t" style="top:433.77px;font-size:12.4px;color:#ccccdc;left:2429.00px;">20</div><div class="t" style="top:641.57px;font-size:12.4px;color:#ccccdc;left:732.50px;width:1200px;text-align:center;">07:30</div><div class="t" style="top:641.57px;font-size:12.4px;color:#ccccdc;left:779.65px;width:1200px;text-align:center;">07:45</div><div class="t" style="top:641.57px;font-size:12.4px;color:#ccccdc;left:826.80px;width:1200px;text-align:center;">08:00</div><div class="t" style="top:641.57px;font-size:12.4px;color:#ccccdc;left:873.95px;width:1200px;text-align:center;">08:15</div><div class="t" style="top:641.57px;font-size:12.4px;color:#ccccdc;left:921.10px;width:1200px;text-align:center;">08:30</div><div class="t" style="top:641.57px;font-size:12.4px;color:#ccccdc;left:968.25px;width:1200px;text-align:center;">08:45</div><div class="t" style="top:641.57px;font-size:12.4px;color:#ccccdc;left:1015.40px;width:1200px;text-align:center;">09:00</div><div class="t" style="top:641.57px;font-size:12.4px;color:#ccccdc;left:1062.55px;width:1200px;text-align:center;">09:15</div><div class="t" style="top:641.57px;font-size:12.4px;color:#ccccdc;left:1109.70px;width:1200px;text-align:center;">09:30</div><div class="t" style="top:641.57px;font-size:12.4px;color:#ccccdc;left:1156.85px;width:1200px;text-align:center;">09:45</div><div class="t" style="top:641.57px;font-size:12.4px;color:#ccccdc;left:1204.00px;width:1200px;text-align:center;">10:00</div><div class="t" style="top:641.57px;font-size:12.4px;color:#ccccdc;left:1251.15px;width:1200px;text-align:center;">10:15</div><div class="t" style="top:641.57px;font-size:12.4px;color:#ccccdc;left:1298.30px;width:1200px;text-align:center;">10:30</div><div class="t" style="top:641.57px;font-size:12.4px;color:#ccccdc;left:1345.45px;width:1200px;text-align:center;">10:45</div><div class="t" style="top:641.57px;font-size:12.4px;color:#ccccdc;left:1392.60px;width:1200px;text-align:center;">11:00</div><div class="t" style="top:641.57px;font-size:12.4px;color:#ccccdc;left:1439.75px;width:1200px;text-align:center;">11:15</div><div class="t" style="top:641.57px;font-size:12.4px;color:#ccccdc;left:1486.90px;width:1200px;text-align:center;">11:30</div><div class="t" style="top:641.57px;font-size:12.4px;color:#ccccdc;left:1534.05px;width:1200px;text-align:center;">11:45</div><div class="t" style="top:641.57px;font-size:12.4px;color:#ccccdc;left:1581.20px;width:1200px;text-align:center;">12:00</div><div class="t" style="top:641.57px;font-size:12.4px;color:#ccccdc;left:1628.35px;width:1200px;text-align:center;">12:15</div><div class="t" style="top:641.57px;font-size:12.4px;color:#ccccdc;left:1675.50px;width:1200px;text-align:center;">12:30</div><div class="t" style="top:641.57px;font-size:12.4px;color:#ccccdc;left:1722.65px;width:1200px;text-align:center;">12:45</div><div class="t" style="top:641.57px;font-size:12.4px;color:#ccccdc;left:1769.80px;width:1200px;text-align:center;">13:00</div><div class="t" style="top:641.57px;font-size:12.4px;color:#ccccdc;left:1816.95px;width:1200px;text-align:center;">13:15</div><div class="a" style="left:1266.0px;top:667.0px;width:14px;height:4px;border-radius:2px;background:#73bf69"></div><div class="t" style="top:662.53px;font-size:12.6px;color:#ccccdc;left:1288.30px;">Health Score</div><div class="t" style="top:662.53px;font-size:12.6px;color:#ccccdc;left:1369.71px;">Last *: 95.3</div><div class="t" style="top:662.53px;font-size:12.6px;color:#ccccdc;left:1442.03px;">Min: 94.2</div><div class="t" style="top:662.53px;font-size:12.6px;color:#ccccdc;left:1502.44px;">Mean: 94.7</div><div class="a" style="left:2013.0px;top:667.0px;width:14px;height:4px;border-radius:2px;background:#f2495c"></div><div class="t" style="top:662.53px;font-size:12.6px;color:#ccccdc;left:2035.30px;">Critical</div><div class="t" style="top:662.53px;font-size:12.6px;color:#ccccdc;left:2082.38px;">Last *: 0</div><div class="t" style="top:662.53px;font-size:12.6px;color:#ccccdc;left:2137.20px;">Min: 0</div><div class="t" style="top:662.53px;font-size:12.6px;color:#ccccdc;left:2180.10px;">Mean: 0</div><div class="a" style="left:2242.4px;top:667.0px;width:14px;height:4px;border-radius:2px;background:#fade2a"></div><div class="t" style="top:662.53px;font-size:12.6px;color:#ccccdc;left:2264.70px;">Warning</div><div class="t" style="top:662.53px;font-size:12.6px;color:#ccccdc;left:2319.74px;">Last *: 0</div><div class="t" style="top:662.53px;font-size:12.6px;color:#ccccdc;left:2374.56px;">Min: 0</div><div class="t" style="top:662.53px;font-size:12.6px;color:#ccccdc;left:2417.45px;">Mean: 0</div><div class="panel" style="left:11px;top:733px;width:1234px;height:296px"></div><div class="t" style="top:743.64px;font-size:14.6px;color:#ccccdc;letter-spacing:0.250px;left:20.00px;">Host CPU &amp; RAM Verlauf (nativ)</div><svg class="a" style="left:252.0px;top:742.0px" width="16" height="16" viewBox="0 0 16 16"><circle cx="8" cy="8" r="6.2" fill="none" stroke="#8f8f9a" stroke-width="1.25"/><rect x="7.4" y="7.1" width="1.2" height="3.6" fill="#8f8f9a"/><rect x="7.4" y="4.9" width="1.2" height="1.2" fill="#8f8f9a"/></svg><svg class="a" style="left:0px;top:770px;overflow:visible" width="1250" height="200" viewBox="0 770 1250 200"><defs><linearGradient id="g3o" gradientUnits="userSpaceOnUse" x1="0" y1="782.0" x2="0" y2="936.6"><stop offset="0" stop-color="#ff9830" stop-opacity="0.15"/><stop offset="1" stop-color="#ff9830" stop-opacity="0.0"/></linearGradient><linearGradient id="g3r" gradientUnits="userSpaceOnUse" x1="0" y1="782.0" x2="0" y2="936.6"><stop offset="0" stop-color="#f2495c" stop-opacity="0.15"/><stop offset="1" stop-color="#f2495c" stop-opacity="0.0"/></linearGradient><linearGradient id="g3p" gradientUnits="userSpaceOnUse" x1="0" y1="782.0" x2="0" y2="936.6"><stop offset="0" stop-color="#b877d9" stop-opacity="0.15"/><stop offset="1" stop-color="#b877d9" stop-opacity="0.0"/></linearGradient><linearGradient id="g3b" gradientUnits="userSpaceOnUse" x1="0" y1="782.0" x2="0" y2="936.6"><stop offset="0" stop-color="#5794f2" stop-opacity="0.1"/><stop offset="1" stop-color="#5794f2" stop-opacity="0.0"/></linearGradient></defs><line x1="126.5" y1="936.60" x2="1166.6" y2="936.60" stroke="rgba(240,250,255,0.09)" stroke-width="1"/><line x1="126.5" y1="905.68" x2="1166.6" y2="905.68" stroke="rgba(240,250,255,0.09)" stroke-width="1"/><line x1="126.5" y1="874.76" x2="1166.6" y2="874.76" stroke="rgba(240,250,255,0.09)" stroke-width="1"/><line x1="126.5" y1="843.84" x2="1166.6" y2="843.84" stroke="rgba(240,250,255,0.09)" stroke-width="1"/><line x1="126.5" y1="812.92" x2="1166.6" y2="812.92" stroke="rgba(240,250,255,0.09)" stroke-width="1"/><line x1="126.5" y1="782.00" x2="1166.6" y2="782.00" stroke="rgba(240,250,255,0.09)" stroke-width="1"/><line x1="163.30" y1="782.0" x2="163.30" y2="939.6" stroke="rgba(240,250,255,0.09)" stroke-width="1"/><line x1="250.04" y1="782.0" x2="250.04" y2="939.6" stroke="rgba(240,250,255,0.09)" stroke-width="1"/><line x1="336.78" y1="782.0" x2="336.78" y2="939.6" stroke="rgba(240,250,255,0.09)" stroke-width="1"/><line x1="423.52" y1="782.0" x2="423.52" y2="939.6" stroke="rgba(240,250,255,0.09)" stroke-width="1"/><line x1="510.26" y1="782.0" x2="510.26" y2="939.6" stroke="rgba(240,250,255,0.09)" stroke-width="1"/><line x1="597.00" y1="782.0" x2="597.00" y2="939.6" stroke="rgba(240,250,255,0.09)" stroke-width="1"/><line x1="683.74" y1="782.0" x2="683.74" y2="939.6" stroke="rgba(240,250,255,0.09)" stroke-width="1"/><line x1="770.48" y1="782.0" x2="770.48" y2="939.6" stroke="rgba(240,250,255,0.09)" stroke-width="1"/><line x1="857.22" y1="782.0" x2="857.22" y2="939.6" stroke="rgba(240,250,255,0.09)" stroke-width="1"/><line x1="943.96" y1="782.0" x2="943.96" y2="939.6" stroke="rgba(240,250,255,0.09)" stroke-width="1"/><line x1="1030.70" y1="782.0" x2="1030.70" y2="939.6" stroke="rgba(240,250,255,0.09)" stroke-width="1"/><line x1="1117.44" y1="782.0" x2="1117.44" y2="939.6" stroke="rgba(240,250,255,0.09)" stroke-width="1"/><path d="M126.17 882.19 L130.03 882.19 L132.34 901.47 L138.51 901.47 L140.83 892.99 L146.23 892.99 L150.08 903.79 L163.97 903.79 L166.28 906.10 L172.45 906.10 L174.77 878.64 L182.48 878.64 L184.79 897.62 L190.96 897.62 L193.28 892.53 L199.45 892.53 L201.76 908.42 L208.71 908.42 L211.02 903.79 L216.42 903.79 L219.50 860.13 L225.67 860.13 L227.99 871.85 L234.16 871.85 L237.25 901.78 L243.42 901.78 L245.73 892.99 L252.67 892.99 L254.21 897.62 L260.39 897.62 L262.70 878.02 L268.87 878.02 L271.18 901.78 L280.44 901.78 L281.98 899.93 L288.15 899.93 L289.70 897.62 L295.10 897.62 L297.41 882.19 L303.58 882.19 L305.12 898.70 L312.07 898.70 L315.15 889.90 L321.32 889.90 L323.64 892.53 L329.04 892.53 L331.35 886.05 L338.29 886.05 L340.61 897.62 L355.26 897.62 L357.58 864.91 L363.75 864.91 L366.06 892.53 L388.43 892.53 L389.97 893.76 L391.52 893.76 L393.83 860.59 L400.00 860.59 L402.71 886.05 L408.11 886.05 L409.66 892.99 L416.60 892.99 L418.91 874.79 L425.08 874.79 L427.40 883.73 L433.57 883.73 L435.88 898.39 L442.05 898.39 L444.37 900.70 L452.08 900.70 L454.39 894.53 L458.25 894.53 L460.56 882.96 L468.28 882.96 L470.59 894.53 L476.76 894.53 L479.85 896.85 L483.71 896.85 L486.02 899.16 L493.73 899.16 L496.05 901.47 L502.99 901.47 L512.25 899.93 L520.73 899.93 L523.04 902.25 L529.21 902.25 L531.53 881.88 L537.70 881.88 L540.01 903.79 L554.67 903.79 L557.75 874.01 L563.15 874.01 L565.47 886.05 L572.41 886.05 L575.50 901.78 L580.12 901.78 L583.21 906.87 L590.15 906.87 L592.47 887.59 L598.64 887.59 L600.95 903.79 L612.52 903.79 L615.61 896.07 L623.32 896.07 L625.63 891.45 L633.35 891.45 L635.66 899.93 L641.83 899.93 L644.15 882.96 L651.09 882.96 L653.40 874.48 L668.06 874.48 L670.37 902.25 L675.00 902.25 L676.17 901.47 L682.34 901.47 L686.97 902.25 L694.68 902.25 L697.00 886.05 L702.40 886.05 L705.48 905.64 L711.65 905.64 L714.74 903.02 L720.91 903.02 L723.22 895.30 L730.17 895.30 L737.88 895.30 L744.05 895.30 L747.13 896.07 L761.79 896.07 L764.10 883.73 L772.59 883.73 L774.90 880.18 L780.30 880.18 L783.39 896.85 L790.33 896.85 L791.87 887.59 L797.27 887.59 L800.36 857.97 L805.76 857.97 L808.84 897.62 L815.79 897.62 L818.10 899.93 L823.50 899.93 L826.58 870.93 L831.98 870.93 L835.07 900.70 L841.24 900.70 L843.55 898.39 L853.58 898.39 L856.67 880.18 L859.75 880.18 L862.07 874.79 L862.84 874.79 L864.38 880.18 L871.32 880.18 L874.41 895.30 L882.89 895.30 L885.98 899.16 L889.06 899.16 L892.15 873.71 L898.32 873.71 L900.17 869.08 L902.18 883.73 L907.58 883.73 L910.66 884.50 L916.83 884.50 L919.92 889.13 L926.86 889.13 L929.17 862.13 L933.03 862.13 L935.34 902.25 L943.06 902.25 L944.60 882.19 L950.00 882.19 L954.26 889.13 L960.43 889.13 L962.74 899.47 L968.14 899.47 L970.45 884.50 L977.40 884.50 L979.71 876.02 L986.65 876.02 L988.97 870.93 L992.05 870.93 L999.77 903.79 L1001.31 903.79 L1003.62 889.90 L1010.56 889.90 L1012.88 903.79 L1020.59 903.79 L1022.91 898.39 L1028.31 898.39 L1030.62 869.85 L1036.02 869.85 L1037.56 883.73 L1042.19 883.73 L1045.28 906.10 L1046.82 906.10 L1048.36 890.67 L1053.76 890.67 L1055.30 904.56 L1060.70 904.56 L1065.33 879.88 L1071.50 879.88 L1073.04 903.79 L1079.21 903.79 L1080.76 895.30 L1087.70 895.30 L1090.79 902.25 L1096.96 902.25 L1099.27 882.96 L1104.67 882.96 L1106.98 856.74 L1113.15 856.74 L1116.24 900.70 L1123.18 900.70 L1125.50 886.05 L1130.90 886.05 L1133.21 903.79 L1138.61 903.79 L1143.24 884.50 L1144.01 884.50 L1152.49 879.88 L1159.44 879.88 L1159.44 936.6 L126.17 936.6 Z" fill="url(#g3r)" stroke="none"/><path d="M126.17 855.96 L130.03 855.96 L133.11 860.13 L138.51 860.13 L140.83 880.96 L147.77 880.96 L150.08 889.13 L157.02 889.13 L158.57 886.82 L163.97 886.82 L166.28 864.14 L173.22 864.14 L174.77 862.91 L182.48 862.91 L184.79 876.02 L190.96 876.02 L193.28 882.96 L199.45 882.96 L200.99 877.10 L208.71 877.10 L211.02 881.88 L214.88 881.88 L217.96 832.05 L225.67 832.05 L227.99 843.93 L234.16 843.93 L237.25 876.02 L242.64 876.02 L244.19 860.13 L251.13 860.13 L253.44 876.02 L259.61 876.02 L261.93 854.11 L268.87 854.11 L271.18 884.97 L278.13 884.97 L280.44 889.13 L286.61 889.13 L288.93 884.04 L294.33 884.04 L296.64 860.13 L303.58 860.13 L305.90 892.22 L310.52 892.22 L313.61 867.23 L320.55 867.23 L323.64 880.96 L329.04 880.96 L331.35 843.16 L338.29 843.16 L340.61 883.73 L347.55 883.73 L350.63 889.90 L352.18 889.90 L356.80 847.17 L363.75 847.17 L366.06 852.88 L373.00 852.88 L375.32 880.18 L385.34 880.18 L388.43 881.42 L389.97 881.42 L392.29 844.09 L400.00 844.09 L402.71 861.67 L408.11 861.67 L410.43 882.96 L415.83 882.96 L418.14 866.76 L425.08 866.76 L427.40 869.08 L433.57 869.08 L435.88 876.02 L442.05 876.02 L445.14 886.82 L452.08 886.82 L454.39 885.28 L458.25 885.28 L460.56 869.85 L468.28 869.85 L470.59 883.42 L476.76 883.42 L479.85 889.90 L481.39 889.90 L486.02 869.08 L492.96 869.08 L495.28 852.88 L503.76 852.88 L506.07 884.97 L512.25 884.97 L513.79 876.33 L520.73 876.33 L523.04 887.59 L528.44 887.59 L531.53 796.11 L537.70 796.11 L540.79 883.73 L546.96 883.73 L549.27 886.82 L555.44 886.82 L557.75 883.73 L563.15 883.73 L565.47 830.20 L572.41 830.20 L575.50 878.80 L581.67 878.80 L583.98 887.59 L589.38 887.59 L591.69 878.64 L597.09 878.64 L600.18 867.53 L607.89 867.53 L610.21 880.65 L615.61 880.65 L617.15 878.64 L624.09 878.64 L626.40 871.85 L633.35 871.85 L635.66 877.87 L641.83 877.87 L644.15 845.94 L651.86 845.94 L654.17 847.17 L659.57 847.17 L661.89 860.13 L668.06 860.13 L670.37 877.56 L675.00 877.56 L679.26 883.73 L685.43 883.73 L687.74 872.93 L693.91 872.93 L696.23 860.13 L702.40 860.13 L705.48 874.48 L711.65 874.48 L713.97 877.56 L727.85 877.56 L730.17 851.80 L737.11 851.80 L740.19 878.64 L745.59 878.64 L747.91 868.31 L754.08 868.31 L757.16 883.73 L762.56 883.73 L765.65 826.65 L772.59 826.65 L774.90 844.39 L780.30 844.39 L783.39 885.28 L788.79 885.28 L791.87 877.56 L797.27 877.56 L800.36 830.97 L805.76 830.97 L808.84 876.02 L814.24 876.02 L817.33 861.67 L823.50 861.67 L825.81 846.25 L831.98 846.25 L835.07 870.62 L840.47 870.62 L842.78 863.21 L850.50 863.21 L852.81 866.76 L855.12 866.76 L856.67 849.79 L863.61 849.79 L865.92 861.67 L872.09 861.67 L874.41 883.73 L880.58 883.73 L882.12 886.05 L885.98 886.05 L889.83 857.51 L897.55 857.51 L899.86 818.17 L902.18 863.68 L908.35 863.68 L910.66 859.82 L916.06 859.82 L919.15 822.80 L926.09 822.80 L928.40 837.14 L934.57 837.14 L937.66 885.28 L942.29 885.28 L944.60 861.67 L950.00 861.67 L954.26 869.08 L961.20 869.08 L963.51 873.71 L968.91 873.71 L971.23 858.59 L978.17 858.59 L980.48 834.06 L987.42 834.06 L989.74 837.14 L992.82 837.14 L998.22 886.05 L1001.31 886.05 L1003.62 866.76 L1011.34 866.76 L1013.65 886.82 L1019.82 886.82 L1021.36 885.58 L1028.31 885.58 L1030.62 859.82 L1033.71 859.82 L1039.88 847.94 L1045.28 847.94 L1048.36 867.84 L1054.53 867.84 L1056.07 872.93 L1062.25 872.93 L1063.79 863.99 L1070.73 863.99 L1072.27 856.74 L1079.21 856.74 L1080.76 859.05 L1088.47 859.05 L1090.79 870.62 L1097.73 870.62 L1099.27 869.54 L1103.90 869.54 L1106.98 830.97 L1113.93 830.97 L1117.01 876.48 L1123.18 876.48 L1125.50 842.08 L1131.67 842.08 L1133.98 886.82 L1140.15 886.82 L1142.47 874.48 L1144.78 883.73 L1147.09 883.73 L1152.49 849.79 L1159.44 849.79 L1159.44 936.6 L126.17 936.6 Z" fill="url(#g3o)" stroke="none"/><path d="M132.34 931.56 C135.17 917.26 138.00 888.67 140.83 888.67 C143.65 888.67 146.48 907.98 149.31 908.42 C152.65 908.93 156.00 908.66 159.34 909.19 C161.91 909.59 164.48 935.41 167.05 935.41 C170.14 935.41 173.22 876.02 176.31 876.02 C179.14 876.02 181.97 907.64 184.79 907.64 C187.36 907.64 189.94 886.82 192.51 886.82 C195.59 886.82 198.68 933.10 201.76 933.10 C205.36 933.10 208.96 923.17 212.56 911.50 C214.88 904.00 217.19 862.91 219.50 862.91 C222.59 862.91 225.67 872.44 228.76 880.65 C231.59 888.17 234.42 916.90 237.25 916.90 C242.39 916.90 247.53 912.35 252.67 906.87 C256.01 903.31 259.36 882.96 262.70 882.96 C265.53 882.96 268.36 909.19 271.18 909.19 C273.76 909.19 276.33 901.09 278.90 900.70 C282.24 900.20 285.58 900.44 288.93 899.93 C291.75 899.50 294.58 886.05 297.41 886.05 C300.50 886.05 303.58 893.24 306.67 894.53 C309.49 895.71 312.32 896.85 315.15 896.85 C317.47 896.85 319.78 891.45 322.09 891.45 C325.44 891.45 328.78 913.04 332.12 913.04 C334.95 913.04 337.78 900.87 340.61 898.39 C343.69 895.68 346.78 896.22 349.86 892.99 C352.43 890.29 355.00 860.59 357.58 860.59 C360.66 860.59 363.75 917.67 366.83 917.67 C369.92 917.67 373.00 883.73 376.09 883.73 C378.66 883.73 381.23 893.76 383.80 893.76 C386.89 893.76 389.97 855.19 393.06 855.19 C396.02 855.19 398.98 892.99 401.94 892.99 C404.77 892.99 407.60 889.10 410.43 885.28 C413.26 881.45 416.08 862.91 418.91 862.91 C421.74 862.91 424.57 868.79 427.40 874.48 C430.22 880.16 433.05 906.87 435.88 906.87 C439.74 906.87 443.60 902.64 447.45 899.16 C452.08 894.98 456.71 879.10 461.34 879.10 C464.42 879.10 467.51 892.99 470.59 892.99 C473.68 892.99 476.76 889.13 479.85 889.13 C482.42 889.13 484.99 905.90 487.56 913.04 C490.65 921.61 493.73 936.18 496.82 936.18 C499.90 936.18 502.99 891.45 506.07 891.45 C508.65 891.45 511.22 916.13 513.79 916.13 C516.87 916.13 519.96 906.10 523.04 906.10 C526.13 906.10 529.21 936.18 532.30 936.18 C534.87 936.18 537.44 915.39 540.01 913.82 C543.10 911.93 546.18 912.73 549.27 910.73 C552.10 908.90 554.93 844.39 557.75 844.39 C560.58 844.39 563.41 926.16 566.24 926.16 C568.81 926.16 571.38 913.82 573.95 913.82 C577.30 913.82 580.64 916.90 583.98 916.90 C586.81 916.90 589.64 881.42 592.47 881.42 C595.55 881.42 598.64 930.01 601.72 930.01 C604.81 930.01 607.89 925.37 610.98 920.76 C613.55 916.91 616.12 900.30 618.69 899.16 C621.26 898.02 623.83 897.31 626.40 897.31 C629.75 897.31 633.09 909.96 636.43 909.96 C640.29 909.96 644.15 897.93 648.00 891.45 C652.63 883.66 657.26 866.76 661.89 866.76 C664.97 866.76 668.06 915.36 671.14 915.36 C673.85 915.36 676.55 906.10 679.26 906.10 C682.08 906.10 684.91 923.07 687.74 923.07 C690.57 923.07 693.40 896.85 696.23 896.85 C699.31 896.85 702.40 926.93 705.48 926.93 C711.14 926.93 716.80 900.70 722.45 900.70 C725.28 900.70 728.11 919.99 730.94 919.99 C734.02 919.99 737.11 899.16 740.19 899.16 C743.02 899.16 745.85 908.42 748.68 908.42 C751.25 908.42 753.82 896.85 756.39 896.85 C759.48 896.85 762.56 920.76 765.65 920.76 C768.73 920.76 771.82 899.43 774.90 897.62 C777.99 895.80 781.07 896.21 784.16 894.53 C789.56 891.60 794.96 859.05 800.36 859.05 C802.93 859.05 805.50 898.73 808.07 906.87 C811.16 916.64 814.24 926.16 817.33 926.16 C820.41 926.16 823.50 874.48 826.58 874.48 C829.16 874.48 831.73 918.32 834.30 919.99 C837.38 921.99 840.47 923.07 843.55 923.07 C846.90 923.07 850.24 920.10 853.58 916.13 C856.67 912.46 859.75 879.88 862.84 879.88 C866.44 879.88 870.04 889.24 873.64 892.99 C876.72 896.20 879.81 901.47 882.89 901.47 C885.72 901.47 888.55 869.08 891.38 869.08 C894.21 869.08 897.03 898.39 899.86 898.39 C902.43 898.39 905.00 869.85 907.58 869.85 C911.18 869.85 914.78 936.18 918.37 936.18 C921.46 936.18 924.55 862.91 927.63 862.91 C929.69 862.91 931.74 933.10 933.80 933.10 C937.66 933.10 941.52 884.50 945.37 884.50 C947.82 884.50 950.27 890.72 952.71 894.53 C956.06 899.74 959.40 913.04 962.74 913.04 C965.57 913.04 968.40 894.53 971.23 894.53 C974.31 894.53 977.40 899.16 980.48 899.16 C983.31 899.16 986.14 884.50 988.97 884.50 C990.77 884.50 992.57 894.72 994.37 899.16 C996.42 904.23 998.48 913.04 1000.54 913.04 C1001.82 913.04 1003.11 897.62 1004.39 897.62 C1007.22 897.62 1010.05 910.73 1012.88 910.73 C1015.71 910.73 1018.54 895.30 1021.36 895.30 C1024.19 895.30 1027.02 913.04 1029.85 913.04 C1031.91 913.04 1033.96 831.28 1036.02 831.28 C1038.85 831.28 1041.68 936.18 1044.50 936.18 C1045.79 936.18 1047.08 900.70 1048.36 900.70 C1050.42 900.70 1052.47 925.39 1054.53 925.39 C1056.59 925.39 1058.65 924.42 1060.70 922.30 C1061.99 920.97 1063.27 877.56 1064.56 877.56 C1067.13 877.56 1069.70 936.18 1072.27 936.18 C1075.10 936.18 1077.93 918.44 1080.76 918.44 C1083.84 918.44 1086.93 922.30 1090.01 922.30 C1092.58 922.30 1095.16 887.68 1097.73 879.10 C1100.81 868.81 1103.90 857.51 1106.98 857.51 C1109.81 857.51 1112.64 914.59 1115.47 914.59 C1118.30 914.59 1121.12 913.53 1123.95 912.27 C1127.04 910.90 1130.12 900.70 1133.21 900.70 C1133.72 900.70 1134.24 911.50 1134.75 911.50 C1136.29 911.50 1137.84 892.99 1139.38 892.99 C1140.92 892.99 1142.47 909.96 1144.01 909.96 C1146.07 909.96 1148.12 881.42 1150.18 881.42 C1150.95 881.42 1151.72 885.02 1152.49 886.82 L1152.49 936.6 L132.34 936.6 Z" fill="url(#g3p)" stroke="none"/><path d="M126.17 882.19 L130.03 882.19 L132.34 901.47 L138.51 901.47 L140.83 892.99 L146.23 892.99 L150.08 903.79 L163.97 903.79 L166.28 906.10 L172.45 906.10 L174.77 878.64 L182.48 878.64 L184.79 897.62 L190.96 897.62 L193.28 892.53 L199.45 892.53 L201.76 908.42 L208.71 908.42 L211.02 903.79 L216.42 903.79 L219.50 860.13 L225.67 860.13 L227.99 871.85 L234.16 871.85 L237.25 901.78 L243.42 901.78 L245.73 892.99 L252.67 892.99 L254.21 897.62 L260.39 897.62 L262.70 878.02 L268.87 878.02 L271.18 901.78 L280.44 901.78 L281.98 899.93 L288.15 899.93 L289.70 897.62 L295.10 897.62 L297.41 882.19 L303.58 882.19 L305.12 898.70 L312.07 898.70 L315.15 889.90 L321.32 889.90 L323.64 892.53 L329.04 892.53 L331.35 886.05 L338.29 886.05 L340.61 897.62 L355.26 897.62 L357.58 864.91 L363.75 864.91 L366.06 892.53 L388.43 892.53 L389.97 893.76 L391.52 893.76 L393.83 860.59 L400.00 860.59 L402.71 886.05 L408.11 886.05 L409.66 892.99 L416.60 892.99 L418.91 874.79 L425.08 874.79 L427.40 883.73 L433.57 883.73 L435.88 898.39 L442.05 898.39 L444.37 900.70 L452.08 900.70 L454.39 894.53 L458.25 894.53 L460.56 882.96 L468.28 882.96 L470.59 894.53 L476.76 894.53 L479.85 896.85 L483.71 896.85 L486.02 899.16 L493.73 899.16 L496.05 901.47 L502.99 901.47 L512.25 899.93 L520.73 899.93 L523.04 902.25 L529.21 902.25 L531.53 881.88 L537.70 881.88 L540.01 903.79 L554.67 903.79 L557.75 874.01 L563.15 874.01 L565.47 886.05 L572.41 886.05 L575.50 901.78 L580.12 901.78 L583.21 906.87 L590.15 906.87 L592.47 887.59 L598.64 887.59 L600.95 903.79 L612.52 903.79 L615.61 896.07 L623.32 896.07 L625.63 891.45 L633.35 891.45 L635.66 899.93 L641.83 899.93 L644.15 882.96 L651.09 882.96 L653.40 874.48 L668.06 874.48 L670.37 902.25 L675.00 902.25 L676.17 901.47 L682.34 901.47 L686.97 902.25 L694.68 902.25 L697.00 886.05 L702.40 886.05 L705.48 905.64 L711.65 905.64 L714.74 903.02 L720.91 903.02 L723.22 895.30 L730.17 895.30 L737.88 895.30 L744.05 895.30 L747.13 896.07 L761.79 896.07 L764.10 883.73 L772.59 883.73 L774.90 880.18 L780.30 880.18 L783.39 896.85 L790.33 896.85 L791.87 887.59 L797.27 887.59 L800.36 857.97 L805.76 857.97 L808.84 897.62 L815.79 897.62 L818.10 899.93 L823.50 899.93 L826.58 870.93 L831.98 870.93 L835.07 900.70 L841.24 900.70 L843.55 898.39 L853.58 898.39 L856.67 880.18 L859.75 880.18 L862.07 874.79 L862.84 874.79 L864.38 880.18 L871.32 880.18 L874.41 895.30 L882.89 895.30 L885.98 899.16 L889.06 899.16 L892.15 873.71 L898.32 873.71 L900.17 869.08 L902.18 883.73 L907.58 883.73 L910.66 884.50 L916.83 884.50 L919.92 889.13 L926.86 889.13 L929.17 862.13 L933.03 862.13 L935.34 902.25 L943.06 902.25 L944.60 882.19 L950.00 882.19 L954.26 889.13 L960.43 889.13 L962.74 899.47 L968.14 899.47 L970.45 884.50 L977.40 884.50 L979.71 876.02 L986.65 876.02 L988.97 870.93 L992.05 870.93 L999.77 903.79 L1001.31 903.79 L1003.62 889.90 L1010.56 889.90 L1012.88 903.79 L1020.59 903.79 L1022.91 898.39 L1028.31 898.39 L1030.62 869.85 L1036.02 869.85 L1037.56 883.73 L1042.19 883.73 L1045.28 906.10 L1046.82 906.10 L1048.36 890.67 L1053.76 890.67 L1055.30 904.56 L1060.70 904.56 L1065.33 879.88 L1071.50 879.88 L1073.04 903.79 L1079.21 903.79 L1080.76 895.30 L1087.70 895.30 L1090.79 902.25 L1096.96 902.25 L1099.27 882.96 L1104.67 882.96 L1106.98 856.74 L1113.15 856.74 L1116.24 900.70 L1123.18 900.70 L1125.50 886.05 L1130.90 886.05 L1133.21 903.79 L1138.61 903.79 L1143.24 884.50 L1144.01 884.50 L1152.49 879.88 L1159.44 879.88" fill="none" stroke="#f2495c" stroke-width="2" stroke-linejoin="round" stroke-linecap="round"/><path d="M126.17 855.96 L130.03 855.96 L133.11 860.13 L138.51 860.13 L140.83 880.96 L147.77 880.96 L150.08 889.13 L157.02 889.13 L158.57 886.82 L163.97 886.82 L166.28 864.14 L173.22 864.14 L174.77 862.91 L182.48 862.91 L184.79 876.02 L190.96 876.02 L193.28 882.96 L199.45 882.96 L200.99 877.10 L208.71 877.10 L211.02 881.88 L214.88 881.88 L217.96 832.05 L225.67 832.05 L227.99 843.93 L234.16 843.93 L237.25 876.02 L242.64 876.02 L244.19 860.13 L251.13 860.13 L253.44 876.02 L259.61 876.02 L261.93 854.11 L268.87 854.11 L271.18 884.97 L278.13 884.97 L280.44 889.13 L286.61 889.13 L288.93 884.04 L294.33 884.04 L296.64 860.13 L303.58 860.13 L305.90 892.22 L310.52 892.22 L313.61 867.23 L320.55 867.23 L323.64 880.96 L329.04 880.96 L331.35 843.16 L338.29 843.16 L340.61 883.73 L347.55 883.73 L350.63 889.90 L352.18 889.90 L356.80 847.17 L363.75 847.17 L366.06 852.88 L373.00 852.88 L375.32 880.18 L385.34 880.18 L388.43 881.42 L389.97 881.42 L392.29 844.09 L400.00 844.09 L402.71 861.67 L408.11 861.67 L410.43 882.96 L415.83 882.96 L418.14 866.76 L425.08 866.76 L427.40 869.08 L433.57 869.08 L435.88 876.02 L442.05 876.02 L445.14 886.82 L452.08 886.82 L454.39 885.28 L458.25 885.28 L460.56 869.85 L468.28 869.85 L470.59 883.42 L476.76 883.42 L479.85 889.90 L481.39 889.90 L486.02 869.08 L492.96 869.08 L495.28 852.88 L503.76 852.88 L506.07 884.97 L512.25 884.97 L513.79 876.33 L520.73 876.33 L523.04 887.59 L528.44 887.59 L531.53 796.11 L537.70 796.11 L540.79 883.73 L546.96 883.73 L549.27 886.82 L555.44 886.82 L557.75 883.73 L563.15 883.73 L565.47 830.20 L572.41 830.20 L575.50 878.80 L581.67 878.80 L583.98 887.59 L589.38 887.59 L591.69 878.64 L597.09 878.64 L600.18 867.53 L607.89 867.53 L610.21 880.65 L615.61 880.65 L617.15 878.64 L624.09 878.64 L626.40 871.85 L633.35 871.85 L635.66 877.87 L641.83 877.87 L644.15 845.94 L651.86 845.94 L654.17 847.17 L659.57 847.17 L661.89 860.13 L668.06 860.13 L670.37 877.56 L675.00 877.56 L679.26 883.73 L685.43 883.73 L687.74 872.93 L693.91 872.93 L696.23 860.13 L702.40 860.13 L705.48 874.48 L711.65 874.48 L713.97 877.56 L727.85 877.56 L730.17 851.80 L737.11 851.80 L740.19 878.64 L745.59 878.64 L747.91 868.31 L754.08 868.31 L757.16 883.73 L762.56 883.73 L765.65 826.65 L772.59 826.65 L774.90 844.39 L780.30 844.39 L783.39 885.28 L788.79 885.28 L791.87 877.56 L797.27 877.56 L800.36 830.97 L805.76 830.97 L808.84 876.02 L814.24 876.02 L817.33 861.67 L823.50 861.67 L825.81 846.25 L831.98 846.25 L835.07 870.62 L840.47 870.62 L842.78 863.21 L850.50 863.21 L852.81 866.76 L855.12 866.76 L856.67 849.79 L863.61 849.79 L865.92 861.67 L872.09 861.67 L874.41 883.73 L880.58 883.73 L882.12 886.05 L885.98 886.05 L889.83 857.51 L897.55 857.51 L899.86 818.17 L902.18 863.68 L908.35 863.68 L910.66 859.82 L916.06 859.82 L919.15 822.80 L926.09 822.80 L928.40 837.14 L934.57 837.14 L937.66 885.28 L942.29 885.28 L944.60 861.67 L950.00 861.67 L954.26 869.08 L961.20 869.08 L963.51 873.71 L968.91 873.71 L971.23 858.59 L978.17 858.59 L980.48 834.06 L987.42 834.06 L989.74 837.14 L992.82 837.14 L998.22 886.05 L1001.31 886.05 L1003.62 866.76 L1011.34 866.76 L1013.65 886.82 L1019.82 886.82 L1021.36 885.58 L1028.31 885.58 L1030.62 859.82 L1033.71 859.82 L1039.88 847.94 L1045.28 847.94 L1048.36 867.84 L1054.53 867.84 L1056.07 872.93 L1062.25 872.93 L1063.79 863.99 L1070.73 863.99 L1072.27 856.74 L1079.21 856.74 L1080.76 859.05 L1088.47 859.05 L1090.79 870.62 L1097.73 870.62 L1099.27 869.54 L1103.90 869.54 L1106.98 830.97 L1113.93 830.97 L1117.01 876.48 L1123.18 876.48 L1125.50 842.08 L1131.67 842.08 L1133.98 886.82 L1140.15 886.82 L1142.47 874.48 L1144.78 883.73 L1147.09 883.73 L1152.49 849.79 L1159.44 849.79" fill="none" stroke="#ff9830" stroke-width="2" stroke-linejoin="round" stroke-linecap="round"/><path d="M132.34 931.56 C135.17 917.26 138.00 888.67 140.83 888.67 C143.65 888.67 146.48 907.98 149.31 908.42 C152.65 908.93 156.00 908.66 159.34 909.19 C161.91 909.59 164.48 935.41 167.05 935.41 C170.14 935.41 173.22 876.02 176.31 876.02 C179.14 876.02 181.97 907.64 184.79 907.64 C187.36 907.64 189.94 886.82 192.51 886.82 C195.59 886.82 198.68 933.10 201.76 933.10 C205.36 933.10 208.96 923.17 212.56 911.50 C214.88 904.00 217.19 862.91 219.50 862.91 C222.59 862.91 225.67 872.44 228.76 880.65 C231.59 888.17 234.42 916.90 237.25 916.90 C242.39 916.90 247.53 912.35 252.67 906.87 C256.01 903.31 259.36 882.96 262.70 882.96 C265.53 882.96 268.36 909.19 271.18 909.19 C273.76 909.19 276.33 901.09 278.90 900.70 C282.24 900.20 285.58 900.44 288.93 899.93 C291.75 899.50 294.58 886.05 297.41 886.05 C300.50 886.05 303.58 893.24 306.67 894.53 C309.49 895.71 312.32 896.85 315.15 896.85 C317.47 896.85 319.78 891.45 322.09 891.45 C325.44 891.45 328.78 913.04 332.12 913.04 C334.95 913.04 337.78 900.87 340.61 898.39 C343.69 895.68 346.78 896.22 349.86 892.99 C352.43 890.29 355.00 860.59 357.58 860.59 C360.66 860.59 363.75 917.67 366.83 917.67 C369.92 917.67 373.00 883.73 376.09 883.73 C378.66 883.73 381.23 893.76 383.80 893.76 C386.89 893.76 389.97 855.19 393.06 855.19 C396.02 855.19 398.98 892.99 401.94 892.99 C404.77 892.99 407.60 889.10 410.43 885.28 C413.26 881.45 416.08 862.91 418.91 862.91 C421.74 862.91 424.57 868.79 427.40 874.48 C430.22 880.16 433.05 906.87 435.88 906.87 C439.74 906.87 443.60 902.64 447.45 899.16 C452.08 894.98 456.71 879.10 461.34 879.10 C464.42 879.10 467.51 892.99 470.59 892.99 C473.68 892.99 476.76 889.13 479.85 889.13 C482.42 889.13 484.99 905.90 487.56 913.04 C490.65 921.61 493.73 936.18 496.82 936.18 C499.90 936.18 502.99 891.45 506.07 891.45 C508.65 891.45 511.22 916.13 513.79 916.13 C516.87 916.13 519.96 906.10 523.04 906.10 C526.13 906.10 529.21 936.18 532.30 936.18 C534.87 936.18 537.44 915.39 540.01 913.82 C543.10 911.93 546.18 912.73 549.27 910.73 C552.10 908.90 554.93 844.39 557.75 844.39 C560.58 844.39 563.41 926.16 566.24 926.16 C568.81 926.16 571.38 913.82 573.95 913.82 C577.30 913.82 580.64 916.90 583.98 916.90 C586.81 916.90 589.64 881.42 592.47 881.42 C595.55 881.42 598.64 930.01 601.72 930.01 C604.81 930.01 607.89 925.37 610.98 920.76 C613.55 916.91 616.12 900.30 618.69 899.16 C621.26 898.02 623.83 897.31 626.40 897.31 C629.75 897.31 633.09 909.96 636.43 909.96 C640.29 909.96 644.15 897.93 648.00 891.45 C652.63 883.66 657.26 866.76 661.89 866.76 C664.97 866.76 668.06 915.36 671.14 915.36 C673.85 915.36 676.55 906.10 679.26 906.10 C682.08 906.10 684.91 923.07 687.74 923.07 C690.57 923.07 693.40 896.85 696.23 896.85 C699.31 896.85 702.40 926.93 705.48 926.93 C711.14 926.93 716.80 900.70 722.45 900.70 C725.28 900.70 728.11 919.99 730.94 919.99 C734.02 919.99 737.11 899.16 740.19 899.16 C743.02 899.16 745.85 908.42 748.68 908.42 C751.25 908.42 753.82 896.85 756.39 896.85 C759.48 896.85 762.56 920.76 765.65 920.76 C768.73 920.76 771.82 899.43 774.90 897.62 C777.99 895.80 781.07 896.21 784.16 894.53 C789.56 891.60 794.96 859.05 800.36 859.05 C802.93 859.05 805.50 898.73 808.07 906.87 C811.16 916.64 814.24 926.16 817.33 926.16 C820.41 926.16 823.50 874.48 826.58 874.48 C829.16 874.48 831.73 918.32 834.30 919.99 C837.38 921.99 840.47 923.07 843.55 923.07 C846.90 923.07 850.24 920.10 853.58 916.13 C856.67 912.46 859.75 879.88 862.84 879.88 C866.44 879.88 870.04 889.24 873.64 892.99 C876.72 896.20 879.81 901.47 882.89 901.47 C885.72 901.47 888.55 869.08 891.38 869.08 C894.21 869.08 897.03 898.39 899.86 898.39 C902.43 898.39 905.00 869.85 907.58 869.85 C911.18 869.85 914.78 936.18 918.37 936.18 C921.46 936.18 924.55 862.91 927.63 862.91 C929.69 862.91 931.74 933.10 933.80 933.10 C937.66 933.10 941.52 884.50 945.37 884.50 C947.82 884.50 950.27 890.72 952.71 894.53 C956.06 899.74 959.40 913.04 962.74 913.04 C965.57 913.04 968.40 894.53 971.23 894.53 C974.31 894.53 977.40 899.16 980.48 899.16 C983.31 899.16 986.14 884.50 988.97 884.50 C990.77 884.50 992.57 894.72 994.37 899.16 C996.42 904.23 998.48 913.04 1000.54 913.04 C1001.82 913.04 1003.11 897.62 1004.39 897.62 C1007.22 897.62 1010.05 910.73 1012.88 910.73 C1015.71 910.73 1018.54 895.30 1021.36 895.30 C1024.19 895.30 1027.02 913.04 1029.85 913.04 C1031.91 913.04 1033.96 831.28 1036.02 831.28 C1038.85 831.28 1041.68 936.18 1044.50 936.18 C1045.79 936.18 1047.08 900.70 1048.36 900.70 C1050.42 900.70 1052.47 925.39 1054.53 925.39 C1056.59 925.39 1058.65 924.42 1060.70 922.30 C1061.99 920.97 1063.27 877.56 1064.56 877.56 C1067.13 877.56 1069.70 936.18 1072.27 936.18 C1075.10 936.18 1077.93 918.44 1080.76 918.44 C1083.84 918.44 1086.93 922.30 1090.01 922.30 C1092.58 922.30 1095.16 887.68 1097.73 879.10 C1100.81 868.81 1103.90 857.51 1106.98 857.51 C1109.81 857.51 1112.64 914.59 1115.47 914.59 C1118.30 914.59 1121.12 913.53 1123.95 912.27 C1127.04 910.90 1130.12 900.70 1133.21 900.70 C1133.72 900.70 1134.24 911.50 1134.75 911.50 C1136.29 911.50 1137.84 892.99 1139.38 892.99 C1140.92 892.99 1142.47 909.96 1144.01 909.96 C1146.07 909.96 1148.12 881.42 1150.18 881.42 C1150.95 881.42 1151.72 885.02 1152.49 886.82" fill="none" stroke="#b877d9" stroke-width="2" stroke-linejoin="round" stroke-linecap="round"/><path d="M126.50 891.00 L1159.40 891.00" fill="none" stroke="#5794f2" stroke-width="2.2" stroke-linejoin="round" stroke-linecap="round"/></svg><div class="t" style="top:930.37px;font-size:12.4px;color:#ccccdc;left:-1149.10px;width:1200px;text-align:right;">0%</div><div class="t" style="top:894.47px;font-size:12.4px;color:#ccccdc;left:-1149.10px;width:1200px;text-align:right;">10%</div><div class="t" style="top:858.57px;font-size:12.4px;color:#ccccdc;left:-1149.10px;width:1200px;text-align:right;">20%</div><div class="t" style="top:822.67px;font-size:12.4px;color:#ccccdc;left:-1149.10px;width:1200px;text-align:right;">30%</div><div class="t" style="top:786.77px;font-size:12.4px;color:#ccccdc;left:-1149.10px;width:1200px;text-align:right;">40%</div><div class="t" style="top:930.37px;font-size:12.4px;color:#ccccdc;left:-1080.20px;width:1200px;text-align:right;">0%</div><div class="t" style="top:930.37px;font-size:12.4px;color:#ccccdc;left:1172.50px;">0%</div><div class="t" style="top:899.45px;font-size:12.4px;color:#ccccdc;left:-1080.20px;width:1200px;text-align:right;">20%</div><div class="t" style="top:899.45px;font-size:12.4px;color:#ccccdc;left:1172.50px;">20%</div><div class="t" style="top:868.53px;font-size:12.4px;color:#ccccdc;left:-1080.20px;width:1200px;text-align:right;">40%</div><div class="t" style="top:868.53px;font-size:12.4px;color:#ccccdc;left:1172.50px;">40%</div><div class="t" style="top:837.61px;font-size:12.4px;color:#ccccdc;left:-1080.20px;width:1200px;text-align:right;">60%</div><div class="t" style="top:837.61px;font-size:12.4px;color:#ccccdc;left:1172.50px;">60%</div><div class="t" style="top:806.69px;font-size:12.4px;color:#ccccdc;left:-1080.20px;width:1200px;text-align:right;">80%</div><div class="t" style="top:806.69px;font-size:12.4px;color:#ccccdc;left:1172.50px;">80%</div><div class="t" style="top:775.77px;font-size:12.4px;color:#ccccdc;left:-1080.20px;width:1200px;text-align:right;">100%</div><div class="t" style="top:775.77px;font-size:12.4px;color:#ccccdc;left:1172.50px;">100%</div><div class="t" style="top:944.77px;font-size:12.4px;color:#ccccdc;left:-436.70px;width:1200px;text-align:center;">07:30</div><div class="t" style="top:944.77px;font-size:12.4px;color:#ccccdc;left:-349.96px;width:1200px;text-align:center;">08:00</div><div class="t" style="top:944.77px;font-size:12.4px;color:#ccccdc;left:-263.22px;width:1200px;text-align:center;">08:30</div><div class="t" style="top:944.77px;font-size:12.4px;color:#ccccdc;left:-176.48px;width:1200px;text-align:center;">09:00</div><div class="t" style="top:944.77px;font-size:12.4px;color:#ccccdc;left:-89.74px;width:1200px;text-align:center;">09:30</div><div class="t" style="top:944.77px;font-size:12.4px;color:#ccccdc;left:-3.00px;width:1200px;text-align:center;">10:00</div><div class="t" style="top:944.77px;font-size:12.4px;color:#ccccdc;left:83.74px;width:1200px;text-align:center;">10:30</div><div class="t" style="top:944.77px;font-size:12.4px;color:#ccccdc;left:170.48px;width:1200px;text-align:center;">11:00</div><div class="t" style="top:944.77px;font-size:12.4px;color:#ccccdc;left:257.22px;width:1200px;text-align:center;">11:30</div><div class="t" style="top:944.77px;font-size:12.4px;color:#ccccdc;left:343.96px;width:1200px;text-align:center;">12:00</div><div class="t" style="top:944.77px;font-size:12.4px;color:#ccccdc;left:430.70px;width:1200px;text-align:center;">12:30</div><div class="t" style="top:944.77px;font-size:12.4px;color:#ccccdc;left:517.44px;width:1200px;text-align:center;">13:00</div><div class="t" style="left:-38.0px;top:852.0px;width:200px;height:14px;line-height:14px;text-align:center;font-size:12.4px;color:#ccccdc;transform:rotate(-90deg)">CPU %</div><div class="t" style="left:1130.8px;top:851.8px;width:200px;height:14px;line-height:14px;text-align:center;font-size:12.4px;color:#ccccdc;transform:rotate(90deg)">RAM %</div><div class="a" style="left:23.8px;top:970.8px;width:14px;height:4px;border-radius:2px;background:#f2495c"></div><div class="t" style="top:966.33px;font-size:12.6px;color:#ccccdc;left:46.10px;">Host CPU</div><div class="t" style="top:966.33px;font-size:12.6px;color:#ccccdc;left:110.68px;">Last *: 36.6%</div><div class="t" style="top:966.33px;font-size:12.6px;color:#ccccdc;left:194.21px;">Max: 51.2%</div><div class="t" style="top:966.33px;font-size:12.6px;color:#ccccdc;left:269.31px;">Mean: 28.9%</div><div class="a" style="left:359.3px;top:970.8px;width:14px;height:4px;border-radius:2px;background:#ff9830"></div><div class="t" style="top:966.33px;font-size:12.6px;color:#ccccdc;left:381.60px;">ioBroker CPU</div><div class="t" style="top:966.33px;font-size:12.6px;color:#ccccdc;left:467.18px;">Last *: 23.9%</div><div class="t" style="top:966.33px;font-size:12.6px;color:#ccccdc;left:550.71px;">Max: 39.0%</div><div class="t" style="top:966.33px;font-size:12.6px;color:#ccccdc;left:625.81px;">Mean: 19.1%</div><div class="a" style="left:713.1px;top:970.8px;width:14px;height:4px;border-radius:2px;background:#b877d9"></div><div class="t" style="top:966.33px;font-size:12.6px;color:#ccccdc;left:735.40px;">Andere Prozesse</div><div class="t" style="top:966.33px;font-size:12.6px;color:#ccccdc;left:840.61px;">Last *: 12.7%</div><div class="t" style="top:966.33px;font-size:12.6px;color:#ccccdc;left:924.13px;">Max: 29.1%</div><div class="t" style="top:966.33px;font-size:12.6px;color:#ccccdc;left:999.23px;">Mean: 9.97%</div><div class="a" style="left:901.3px;top:1009.4px;width:14px;height:4px;border-radius:2px;background:#5794f2"></div><div class="t" style="top:1004.93px;font-size:12.6px;color:#ccccdc;left:923.56px;">RAM belegt %</div><div class="t" style="top:1004.93px;font-size:12.6px;color:#ccccdc;left:1012.66px;">Last *: 29%</div><div class="t" style="top:1004.93px;font-size:12.6px;color:#ccccdc;left:1085.68px;">Max: 29%</div><div class="t" style="top:1004.93px;font-size:12.6px;color:#ccccdc;left:1150.28px;">Mean: 28.5%</div><div class="panel" style="left:1253px;top:733px;width:1234px;height:296px"></div><div class="t" style="top:743.64px;font-size:14.6px;color:#ccccdc;letter-spacing:0.224px;left:1262.00px;">Disk, Load Average &amp; Event Loop Lag</div><svg class="a" style="left:1531.5px;top:742.0px" width="16" height="16" viewBox="0 0 16 16"><circle cx="8" cy="8" r="6.2" fill="none" stroke="#8f8f9a" stroke-width="1.25"/><rect x="7.4" y="7.1" width="1.2" height="3.6" fill="#8f8f9a"/><rect x="7.4" y="4.9" width="1.2" height="1.2" fill="#8f8f9a"/></svg><svg class="a" style="left:1250px;top:770px;overflow:visible" width="1240" height="200" viewBox="1250 770 1240 200"><defs><linearGradient id="g4g" gradientUnits="userSpaceOnUse" x1="0" y1="781.8" x2="0" y2="950.5"><stop offset="0" stop-color="#73bf69" stop-opacity="0.12"/><stop offset="1" stop-color="#73bf69" stop-opacity="0.0"/></linearGradient><linearGradient id="g4o" gradientUnits="userSpaceOnUse" x1="0" y1="781.8" x2="0" y2="950.5"><stop offset="0" stop-color="#ff9830" stop-opacity="0.15"/><stop offset="1" stop-color="#ff9830" stop-opacity="0.0"/></linearGradient><linearGradient id="g4p" gradientUnits="userSpaceOnUse" x1="0" y1="781.8" x2="0" y2="950.5"><stop offset="0" stop-color="#b877d9" stop-opacity="0.15"/><stop offset="1" stop-color="#b877d9" stop-opacity="0.0"/></linearGradient><linearGradient id="g4y" gradientUnits="userSpaceOnUse" x1="0" y1="781.8" x2="0" y2="950.5"><stop offset="0" stop-color="#fade2a" stop-opacity="0.15"/><stop offset="1" stop-color="#fade2a" stop-opacity="0.0"/></linearGradient></defs><line x1="1345.3" y1="806.00" x2="2375.0" y2="806.00" stroke="rgba(240,250,255,0.09)" stroke-width="1"/><line x1="1345.3" y1="854.30" x2="2375.0" y2="854.30" stroke="rgba(240,250,255,0.09)" stroke-width="1"/><line x1="1345.3" y1="902.30" x2="2375.0" y2="902.30" stroke="rgba(240,250,255,0.09)" stroke-width="1"/><line x1="1345.3" y1="950.30" x2="2375.0" y2="950.30" stroke="rgba(240,250,255,0.09)" stroke-width="1"/><line x1="1381.10" y1="781.8" x2="1381.10" y2="953.5" stroke="rgba(240,250,255,0.09)" stroke-width="1"/><line x1="1466.95" y1="781.8" x2="1466.95" y2="953.5" stroke="rgba(240,250,255,0.09)" stroke-width="1"/><line x1="1552.80" y1="781.8" x2="1552.80" y2="953.5" stroke="rgba(240,250,255,0.09)" stroke-width="1"/><line x1="1638.65" y1="781.8" x2="1638.65" y2="953.5" stroke="rgba(240,250,255,0.09)" stroke-width="1"/><line x1="1724.50" y1="781.8" x2="1724.50" y2="953.5" stroke="rgba(240,250,255,0.09)" stroke-width="1"/><line x1="1810.35" y1="781.8" x2="1810.35" y2="953.5" stroke="rgba(240,250,255,0.09)" stroke-width="1"/><line x1="1896.20" y1="781.8" x2="1896.20" y2="953.5" stroke="rgba(240,250,255,0.09)" stroke-width="1"/><line x1="1982.05" y1="781.8" x2="1982.05" y2="953.5" stroke="rgba(240,250,255,0.09)" stroke-width="1"/><line x1="2067.90" y1="781.8" x2="2067.90" y2="953.5" stroke="rgba(240,250,255,0.09)" stroke-width="1"/><line x1="2153.75" y1="781.8" x2="2153.75" y2="953.5" stroke="rgba(240,250,255,0.09)" stroke-width="1"/><line x1="2239.60" y1="781.8" x2="2239.60" y2="953.5" stroke="rgba(240,250,255,0.09)" stroke-width="1"/><line x1="2325.45" y1="781.8" x2="2325.45" y2="953.5" stroke="rgba(240,250,255,0.09)" stroke-width="1"/><path d="M1345.74 858.77 L1356.39 858.77 L1359.67 874.02 L1374.43 874.02 L1376.89 875.49 L1393.28 875.49 L1394.10 876.48 L1408.03 876.48 L1411.31 825.98 L1426.07 825.98 L1428.52 832.87 L1443.28 832.87 L1445.74 836.97 L1461.31 836.97 L1462.95 837.95 L1477.70 837.95 L1480.16 841.89 L1494.92 841.89 L1497.38 832.05 L1512.13 832.05 L1514.59 836.15 L1545.74 836.15 L1548.20 832.05 L1562.95 832.05 L1565.41 834.67 L1580.16 834.67 L1582.62 827.95 L1598.20 827.95 L1600.66 841.89 L1614.59 841.89 L1617.05 850.25 L1620.00 850.25 L1632.21 849.75 L1635.49 855.00 L1649.43 855.00 L1652.70 861.56 L1665.82 861.56 L1669.10 864.84 L1683.03 864.84 L1686.31 867.79 L1701.07 867.79 L1704.34 864.84 L1719.10 864.84 L1721.56 866.48 L1735.49 866.48 L1738.77 869.75 L1751.89 869.75 L1754.34 857.95 L1769.10 857.95 L1771.56 850.08 L1786.31 850.08 L1789.59 858.77 L1805.16 858.77 L1807.62 862.87 L1820.74 862.87 L1824.02 888.61 L1837.13 888.61 L1840.41 884.51 L1871.56 884.51 L1874.84 915.66 L1888.77 915.66 L1892.05 916.97 L1895.00 916.97 L1906.39 916.64 L1909.67 923.85 L1924.43 923.85 L1926.89 909.10 L1940.82 909.10 L1944.10 910.08 L1958.85 910.08 L1961.31 915.00 L1975.25 915.00 L1977.70 907.62 L1992.46 907.62 L1995.74 919.10 L2010.49 919.10 L2012.95 923.03 L2027.70 923.03 L2030.16 930.41 L2044.10 930.41 L2046.56 928.93 L2061.31 928.93 L2064.59 930.57 L2082.62 930.57 L2085.08 934.67 L2100.66 934.67 L2103.11 912.05 L2137.54 912.05 L2140.00 913.69 L2170.00 913.69 L2171.56 913.69 L2173.20 850.08 L2187.95 850.08 L2190.41 865.82 L2202.70 865.82 L2208.44 875.16 L2220.74 875.16 L2222.38 876.97 L2237.13 876.97 L2238.77 881.72 L2243.69 881.72 L2245.33 876.97 L2261.72 876.97 L2264.18 804.18 L2279.75 804.18 L2282.21 796.80 L2297.79 796.80 L2300.25 798.11 L2314.18 798.11 L2316.64 800.08 L2331.39 800.08 L2333.85 818.93 L2351.07 818.93 L2354.34 822.21 L2368.28 822.21 L2368.28 950.5 L1345.74 950.5 Z" fill="url(#g4g)" stroke="none"/><path d="M1345.30 877.10 L2368.30 877.10 L2368.30 950.5 L1345.30 950.5 Z" fill="url(#g4o)" stroke="none"/><path d="M1345.74 905.16 L1349.84 905.16 L1352.30 923.03 L1356.39 923.03 L1359.67 936.64 L1366.23 936.64 L1368.69 927.95 L1373.61 927.95 L1376.07 910.90 L1382.62 910.90 L1385.08 918.61 L1392.46 918.61 L1394.92 905.16 L1400.66 905.16 L1403.11 906.80 L1409.67 906.80 L1412.13 913.69 L1417.05 913.69 L1419.51 925.49 L1426.07 925.49 L1428.52 920.74 L1435.08 920.74 L1436.72 912.87 L1443.28 912.87 L1445.74 909.10 L1452.30 909.10 L1454.75 927.62 L1459.67 927.62 L1462.95 931.72 L1469.51 931.72 L1471.97 872.38 L1477.70 872.38 L1480.16 908.77 L1485.90 908.77 L1488.36 884.18 L1494.92 884.18 L1497.38 915.00 L1502.30 915.00 L1505.57 928.77 L1520.33 928.77 L1522.79 920.74 L1529.34 920.74 L1531.80 904.18 L1535.90 904.18 L1539.18 879.26 L1545.74 879.26 L1549.02 907.13 L1554.75 907.13 L1558.03 930.08 L1562.95 930.08 L1565.41 910.74 L1571.15 910.74 L1573.61 897.30 L1580.16 897.30 L1583.44 921.56 L1589.18 921.56 L1591.64 923.20 L1598.20 923.20 L1600.66 918.61 L1605.57 918.61 L1608.85 907.95 L1620.00 907.95 L1622.38 907.95 L1625.66 926.80 L1632.21 926.80 L1634.67 922.70 L1641.23 922.70 L1643.69 894.02 L1648.61 894.02 L1651.89 932.05 L1664.18 932.05 L1669.10 915.82 L1674.84 915.82 L1678.11 893.20 L1683.85 893.20 L1686.31 917.79 L1692.05 917.79 L1694.51 918.61 L1701.07 918.61 L1704.34 882.87 L1709.26 882.87 L1712.54 862.05 L1718.28 862.05 L1721.56 923.52 L1726.48 923.52 L1729.75 901.72 L1735.49 901.72 L1737.95 898.93 L1751.89 898.93 L1755.16 906.64 L1760.90 906.64 L1763.36 901.07 L1769.10 901.07 L1772.38 906.64 L1777.30 906.64 L1780.57 865.33 L1786.31 865.33 L1789.59 922.70 L1795.33 922.70 L1798.61 897.79 L1804.34 897.79 L1806.80 887.13 L1812.54 887.13 L1815.00 890.74 L1821.56 890.74 L1824.02 886.15 L1828.11 886.15 L1831.39 910.74 L1837.95 910.74 L1841.23 910.08 L1846.15 910.08 L1848.61 896.15 L1855.16 896.15 L1858.44 911.56 L1863.36 911.56 L1866.64 915.33 L1871.56 915.33 L1874.84 910.90 L1881.39 910.90 L1883.85 916.97 L1888.77 916.97 L1892.05 898.44 L1895.00 898.44 L1898.20 899.26 L1901.48 910.90 L1907.21 910.90 L1909.67 908.77 L1915.41 908.77 L1917.87 914.02 L1924.43 914.02 L1926.89 917.79 L1931.80 917.79 L1935.08 880.08 L1941.64 880.08 L1944.10 900.90 L1949.84 900.90 L1952.30 866.97 L1958.03 866.97 L1960.49 895.66 L1967.87 895.66 L1970.33 883.85 L1974.43 883.85 L1977.70 798.11 L1984.26 798.11 L1986.72 839.92 L1992.46 839.92 L1995.74 920.57 L2001.48 920.57 L2004.75 877.13 L2010.49 877.13 L2012.95 826.48 L2018.69 826.48 L2021.15 873.52 L2027.70 873.52 L2030.16 899.75 L2035.08 899.75 L2037.54 889.10 L2044.10 889.10 L2046.56 903.85 L2053.11 903.85 L2055.57 916.48 L2061.31 916.48 L2063.77 907.13 L2067.05 907.13 L2068.69 914.02 L2071.97 914.02 L2075.25 886.64 L2083.44 886.64 L2085.90 898.11 L2092.46 898.11 L2094.92 905.16 L2100.66 905.16 L2103.11 911.72 L2108.85 911.72 L2110.49 896.48 L2116.23 896.48 L2120.33 928.77 L2127.70 928.77 L2130.16 918.93 L2135.90 918.93 L2137.54 898.11 L2143.28 898.11 L2146.56 905.82 L2153.93 905.82 L2155.57 888.28 L2162.13 888.28 L2164.59 905.16 L2170.00 905.16 L2170.74 905.16 L2173.20 911.72 L2178.93 911.72 L2181.39 901.07 L2187.95 901.07 L2190.41 899.75 L2196.97 899.75 L2199.43 904.18 L2204.34 904.18 L2209.26 910.41 L2210.08 910.41 L2212.05 904.67 L2214.18 922.70 L2219.92 922.70 L2222.38 920.25 L2228.11 920.25 L2231.39 910.90 L2237.95 910.90 L2240.41 915.33 L2242.87 915.33 L2245.33 893.20 L2254.34 893.20 L2257.62 861.56 L2262.54 861.56 L2265.00 888.61 L2268.28 888.61 L2270.25 908.77 L2272.38 887.79 L2279.75 887.79 L2281.39 915.66 L2287.13 915.66 L2289.59 859.10 L2297.79 859.10 L2299.43 865.66 L2305.16 865.66 L2307.62 898.44 L2314.18 898.44 L2316.64 914.84 L2322.38 914.84 L2324.02 884.67 L2331.39 884.67 L2333.03 894.84 L2341.23 894.84 L2342.87 918.61 L2346.15 918.61 L2348.11 889.92 L2351.89 915.33 L2356.80 915.33 L2358.44 912.87 L2359.26 912.87 L2361.72 915.66 L2368.28 915.66 L2368.28 950.5 L1345.74 950.5 Z" fill="url(#g4p)" stroke="none"/><path d="M1505.57 943.20 C1508.58 935.27 1511.58 920.00 1514.59 919.43 C1517.32 918.91 1520.05 919.14 1522.79 918.61 C1525.79 918.02 1528.80 821.89 1531.80 821.89 C1534.26 821.89 1536.72 933.72 1539.18 934.18 C1542.19 934.74 1545.19 935.00 1548.20 935.00 C1551.48 935.00 1554.75 926.80 1558.03 926.80 C1560.77 926.80 1563.50 943.20 1566.23 943.20 C1569.23 943.20 1572.24 934.51 1575.25 934.51 C1577.70 934.51 1580.16 942.70 1582.62 942.70 C1586.17 942.70 1589.73 942.70 1593.28 942.70 C1598.47 942.70 1603.66 910.41 1608.85 910.41 C1611.58 910.41 1614.32 943.20 1617.05 943.20 C1620.19 943.20 1623.33 934.51 1626.48 934.51 C1629.21 934.51 1631.94 942.70 1634.67 942.70 C1637.68 942.70 1640.68 942.70 1643.69 942.70 C1646.42 942.70 1649.15 798.11 1651.89 798.11 C1654.89 798.11 1657.90 925.75 1660.90 932.54 C1663.63 938.71 1666.37 942.70 1669.10 942.70 C1672.10 942.70 1675.11 934.51 1678.11 934.51 C1680.85 934.51 1683.58 942.70 1686.31 942.70 C1689.32 942.70 1692.32 942.70 1695.33 942.70 C1698.06 942.70 1700.79 934.51 1703.52 934.51 C1706.26 934.51 1708.99 942.70 1711.72 942.70 C1720.46 942.70 1729.21 942.70 1737.95 942.70 C1740.68 942.70 1743.42 934.51 1746.15 934.51 C1749.15 934.51 1752.16 942.70 1755.16 942.70 C1758.17 942.70 1761.17 942.70 1764.18 942.70 C1766.91 942.70 1769.64 910.41 1772.38 910.41 C1775.11 910.41 1777.84 942.70 1780.57 942.70 C1789.59 942.70 1798.61 942.70 1807.62 942.70 C1812.81 942.70 1818.01 926.80 1823.20 926.80 C1825.93 926.80 1828.66 942.70 1831.39 942.70 C1849.43 942.70 1867.46 942.70 1885.49 942.70 C1888.63 942.70 1891.78 942.70 1894.92 942.70 C1942.73 942.70 1990.55 942.70 2038.36 942.70 C2041.09 942.70 2043.83 934.51 2046.56 934.51 C2049.29 934.51 2052.02 942.70 2054.75 942.70 C2058.03 942.70 2061.31 942.70 2064.59 942.70 C2068.42 942.70 2072.24 805.49 2076.07 805.49 C2078.80 805.49 2081.53 916.27 2084.26 925.16 C2087.54 935.84 2090.82 942.70 2094.10 942.70 C2097.10 942.70 2100.11 919.43 2103.11 919.43 C2105.85 919.43 2108.58 919.43 2111.31 919.43 C2112.13 919.43 2112.95 942.70 2113.77 942.70 C2124.97 942.70 2136.17 942.70 2147.38 942.70 C2150.11 942.70 2152.84 934.51 2155.57 934.51 C2158.31 934.51 2161.04 942.70 2163.77 942.70 C2165.82 942.70 2167.87 942.70 2169.92 942.70 C2173.74 942.70 2177.57 942.70 2181.39 942.70 C2184.13 942.70 2186.86 934.51 2189.59 934.51 C2192.60 934.51 2195.60 934.51 2198.61 934.51 C2200.52 934.51 2202.43 942.70 2204.34 942.70 C2206.53 942.70 2208.72 942.70 2210.90 942.70 C2211.99 942.70 2213.09 934.51 2214.18 934.51 C2216.64 934.51 2219.10 942.70 2221.56 942.70 C2241.50 942.70 2261.45 942.70 2281.39 942.70 C2284.13 942.70 2286.86 934.51 2289.59 934.51 C2292.32 934.51 2295.05 942.70 2297.79 942.70 C2312.54 942.70 2327.30 942.70 2342.05 942.70 C2343.96 942.70 2345.87 926.80 2347.79 926.80 C2348.88 926.80 2349.97 937.73 2351.07 943.20 L2351.07 950.5 L1505.57 950.5 Z" fill="url(#g4y)" stroke="none"/><path d="M1345.74 858.77 L1356.39 858.77 L1359.67 874.02 L1374.43 874.02 L1376.89 875.49 L1393.28 875.49 L1394.10 876.48 L1408.03 876.48 L1411.31 825.98 L1426.07 825.98 L1428.52 832.87 L1443.28 832.87 L1445.74 836.97 L1461.31 836.97 L1462.95 837.95 L1477.70 837.95 L1480.16 841.89 L1494.92 841.89 L1497.38 832.05 L1512.13 832.05 L1514.59 836.15 L1545.74 836.15 L1548.20 832.05 L1562.95 832.05 L1565.41 834.67 L1580.16 834.67 L1582.62 827.95 L1598.20 827.95 L1600.66 841.89 L1614.59 841.89 L1617.05 850.25 L1620.00 850.25 L1632.21 849.75 L1635.49 855.00 L1649.43 855.00 L1652.70 861.56 L1665.82 861.56 L1669.10 864.84 L1683.03 864.84 L1686.31 867.79 L1701.07 867.79 L1704.34 864.84 L1719.10 864.84 L1721.56 866.48 L1735.49 866.48 L1738.77 869.75 L1751.89 869.75 L1754.34 857.95 L1769.10 857.95 L1771.56 850.08 L1786.31 850.08 L1789.59 858.77 L1805.16 858.77 L1807.62 862.87 L1820.74 862.87 L1824.02 888.61 L1837.13 888.61 L1840.41 884.51 L1871.56 884.51 L1874.84 915.66 L1888.77 915.66 L1892.05 916.97 L1895.00 916.97 L1906.39 916.64 L1909.67 923.85 L1924.43 923.85 L1926.89 909.10 L1940.82 909.10 L1944.10 910.08 L1958.85 910.08 L1961.31 915.00 L1975.25 915.00 L1977.70 907.62 L1992.46 907.62 L1995.74 919.10 L2010.49 919.10 L2012.95 923.03 L2027.70 923.03 L2030.16 930.41 L2044.10 930.41 L2046.56 928.93 L2061.31 928.93 L2064.59 930.57 L2082.62 930.57 L2085.08 934.67 L2100.66 934.67 L2103.11 912.05 L2137.54 912.05 L2140.00 913.69 L2170.00 913.69 L2171.56 913.69 L2173.20 850.08 L2187.95 850.08 L2190.41 865.82 L2202.70 865.82 L2208.44 875.16 L2220.74 875.16 L2222.38 876.97 L2237.13 876.97 L2238.77 881.72 L2243.69 881.72 L2245.33 876.97 L2261.72 876.97 L2264.18 804.18 L2279.75 804.18 L2282.21 796.80 L2297.79 796.80 L2300.25 798.11 L2314.18 798.11 L2316.64 800.08 L2331.39 800.08 L2333.85 818.93 L2351.07 818.93 L2354.34 822.21 L2368.28 822.21" fill="none" stroke="#73bf69" stroke-width="2" stroke-linejoin="round" stroke-linecap="round"/><path d="M1345.30 877.10 L2368.30 877.10" fill="none" stroke="#ff9830" stroke-width="2.2" stroke-linejoin="round" stroke-linecap="round"/><path d="M1345.74 905.16 L1349.84 905.16 L1352.30 923.03 L1356.39 923.03 L1359.67 936.64 L1366.23 936.64 L1368.69 927.95 L1373.61 927.95 L1376.07 910.90 L1382.62 910.90 L1385.08 918.61 L1392.46 918.61 L1394.92 905.16 L1400.66 905.16 L1403.11 906.80 L1409.67 906.80 L1412.13 913.69 L1417.05 913.69 L1419.51 925.49 L1426.07 925.49 L1428.52 920.74 L1435.08 920.74 L1436.72 912.87 L1443.28 912.87 L1445.74 909.10 L1452.30 909.10 L1454.75 927.62 L1459.67 927.62 L1462.95 931.72 L1469.51 931.72 L1471.97 872.38 L1477.70 872.38 L1480.16 908.77 L1485.90 908.77 L1488.36 884.18 L1494.92 884.18 L1497.38 915.00 L1502.30 915.00 L1505.57 928.77 L1520.33 928.77 L1522.79 920.74 L1529.34 920.74 L1531.80 904.18 L1535.90 904.18 L1539.18 879.26 L1545.74 879.26 L1549.02 907.13 L1554.75 907.13 L1558.03 930.08 L1562.95 930.08 L1565.41 910.74 L1571.15 910.74 L1573.61 897.30 L1580.16 897.30 L1583.44 921.56 L1589.18 921.56 L1591.64 923.20 L1598.20 923.20 L1600.66 918.61 L1605.57 918.61 L1608.85 907.95 L1620.00 907.95 L1622.38 907.95 L1625.66 926.80 L1632.21 926.80 L1634.67 922.70 L1641.23 922.70 L1643.69 894.02 L1648.61 894.02 L1651.89 932.05 L1664.18 932.05 L1669.10 915.82 L1674.84 915.82 L1678.11 893.20 L1683.85 893.20 L1686.31 917.79 L1692.05 917.79 L1694.51 918.61 L1701.07 918.61 L1704.34 882.87 L1709.26 882.87 L1712.54 862.05 L1718.28 862.05 L1721.56 923.52 L1726.48 923.52 L1729.75 901.72 L1735.49 901.72 L1737.95 898.93 L1751.89 898.93 L1755.16 906.64 L1760.90 906.64 L1763.36 901.07 L1769.10 901.07 L1772.38 906.64 L1777.30 906.64 L1780.57 865.33 L1786.31 865.33 L1789.59 922.70 L1795.33 922.70 L1798.61 897.79 L1804.34 897.79 L1806.80 887.13 L1812.54 887.13 L1815.00 890.74 L1821.56 890.74 L1824.02 886.15 L1828.11 886.15 L1831.39 910.74 L1837.95 910.74 L1841.23 910.08 L1846.15 910.08 L1848.61 896.15 L1855.16 896.15 L1858.44 911.56 L1863.36 911.56 L1866.64 915.33 L1871.56 915.33 L1874.84 910.90 L1881.39 910.90 L1883.85 916.97 L1888.77 916.97 L1892.05 898.44 L1895.00 898.44 L1898.20 899.26 L1901.48 910.90 L1907.21 910.90 L1909.67 908.77 L1915.41 908.77 L1917.87 914.02 L1924.43 914.02 L1926.89 917.79 L1931.80 917.79 L1935.08 880.08 L1941.64 880.08 L1944.10 900.90 L1949.84 900.90 L1952.30 866.97 L1958.03 866.97 L1960.49 895.66 L1967.87 895.66 L1970.33 883.85 L1974.43 883.85 L1977.70 798.11 L1984.26 798.11 L1986.72 839.92 L1992.46 839.92 L1995.74 920.57 L2001.48 920.57 L2004.75 877.13 L2010.49 877.13 L2012.95 826.48 L2018.69 826.48 L2021.15 873.52 L2027.70 873.52 L2030.16 899.75 L2035.08 899.75 L2037.54 889.10 L2044.10 889.10 L2046.56 903.85 L2053.11 903.85 L2055.57 916.48 L2061.31 916.48 L2063.77 907.13 L2067.05 907.13 L2068.69 914.02 L2071.97 914.02 L2075.25 886.64 L2083.44 886.64 L2085.90 898.11 L2092.46 898.11 L2094.92 905.16 L2100.66 905.16 L2103.11 911.72 L2108.85 911.72 L2110.49 896.48 L2116.23 896.48 L2120.33 928.77 L2127.70 928.77 L2130.16 918.93 L2135.90 918.93 L2137.54 898.11 L2143.28 898.11 L2146.56 905.82 L2153.93 905.82 L2155.57 888.28 L2162.13 888.28 L2164.59 905.16 L2170.00 905.16 L2170.74 905.16 L2173.20 911.72 L2178.93 911.72 L2181.39 901.07 L2187.95 901.07 L2190.41 899.75 L2196.97 899.75 L2199.43 904.18 L2204.34 904.18 L2209.26 910.41 L2210.08 910.41 L2212.05 904.67 L2214.18 922.70 L2219.92 922.70 L2222.38 920.25 L2228.11 920.25 L2231.39 910.90 L2237.95 910.90 L2240.41 915.33 L2242.87 915.33 L2245.33 893.20 L2254.34 893.20 L2257.62 861.56 L2262.54 861.56 L2265.00 888.61 L2268.28 888.61 L2270.25 908.77 L2272.38 887.79 L2279.75 887.79 L2281.39 915.66 L2287.13 915.66 L2289.59 859.10 L2297.79 859.10 L2299.43 865.66 L2305.16 865.66 L2307.62 898.44 L2314.18 898.44 L2316.64 914.84 L2322.38 914.84 L2324.02 884.67 L2331.39 884.67 L2333.03 894.84 L2341.23 894.84 L2342.87 918.61 L2346.15 918.61 L2348.11 889.92 L2351.89 915.33 L2356.80 915.33 L2358.44 912.87 L2359.26 912.87 L2361.72 915.66 L2368.28 915.66" fill="none" stroke="#b877d9" stroke-width="2" stroke-linejoin="round" stroke-linecap="round"/><path d="M1505.57 943.20 C1508.58 935.27 1511.58 920.00 1514.59 919.43 C1517.32 918.91 1520.05 919.14 1522.79 918.61 C1525.79 918.02 1528.80 821.89 1531.80 821.89 C1534.26 821.89 1536.72 933.72 1539.18 934.18 C1542.19 934.74 1545.19 935.00 1548.20 935.00 C1551.48 935.00 1554.75 926.80 1558.03 926.80 C1560.77 926.80 1563.50 943.20 1566.23 943.20 C1569.23 943.20 1572.24 934.51 1575.25 934.51 C1577.70 934.51 1580.16 942.70 1582.62 942.70 C1586.17 942.70 1589.73 942.70 1593.28 942.70 C1598.47 942.70 1603.66 910.41 1608.85 910.41 C1611.58 910.41 1614.32 943.20 1617.05 943.20 C1620.19 943.20 1623.33 934.51 1626.48 934.51 C1629.21 934.51 1631.94 942.70 1634.67 942.70 C1637.68 942.70 1640.68 942.70 1643.69 942.70 C1646.42 942.70 1649.15 798.11 1651.89 798.11 C1654.89 798.11 1657.90 925.75 1660.90 932.54 C1663.63 938.71 1666.37 942.70 1669.10 942.70 C1672.10 942.70 1675.11 934.51 1678.11 934.51 C1680.85 934.51 1683.58 942.70 1686.31 942.70 C1689.32 942.70 1692.32 942.70 1695.33 942.70 C1698.06 942.70 1700.79 934.51 1703.52 934.51 C1706.26 934.51 1708.99 942.70 1711.72 942.70 C1720.46 942.70 1729.21 942.70 1737.95 942.70 C1740.68 942.70 1743.42 934.51 1746.15 934.51 C1749.15 934.51 1752.16 942.70 1755.16 942.70 C1758.17 942.70 1761.17 942.70 1764.18 942.70 C1766.91 942.70 1769.64 910.41 1772.38 910.41 C1775.11 910.41 1777.84 942.70 1780.57 942.70 C1789.59 942.70 1798.61 942.70 1807.62 942.70 C1812.81 942.70 1818.01 926.80 1823.20 926.80 C1825.93 926.80 1828.66 942.70 1831.39 942.70 C1849.43 942.70 1867.46 942.70 1885.49 942.70 C1888.63 942.70 1891.78 942.70 1894.92 942.70 C1942.73 942.70 1990.55 942.70 2038.36 942.70 C2041.09 942.70 2043.83 934.51 2046.56 934.51 C2049.29 934.51 2052.02 942.70 2054.75 942.70 C2058.03 942.70 2061.31 942.70 2064.59 942.70 C2068.42 942.70 2072.24 805.49 2076.07 805.49 C2078.80 805.49 2081.53 916.27 2084.26 925.16 C2087.54 935.84 2090.82 942.70 2094.10 942.70 C2097.10 942.70 2100.11 919.43 2103.11 919.43 C2105.85 919.43 2108.58 919.43 2111.31 919.43 C2112.13 919.43 2112.95 942.70 2113.77 942.70 C2124.97 942.70 2136.17 942.70 2147.38 942.70 C2150.11 942.70 2152.84 934.51 2155.57 934.51 C2158.31 934.51 2161.04 942.70 2163.77 942.70 C2165.82 942.70 2167.87 942.70 2169.92 942.70 C2173.74 942.70 2177.57 942.70 2181.39 942.70 C2184.13 942.70 2186.86 934.51 2189.59 934.51 C2192.60 934.51 2195.60 934.51 2198.61 934.51 C2200.52 934.51 2202.43 942.70 2204.34 942.70 C2206.53 942.70 2208.72 942.70 2210.90 942.70 C2211.99 942.70 2213.09 934.51 2214.18 934.51 C2216.64 934.51 2219.10 942.70 2221.56 942.70 C2241.50 942.70 2261.45 942.70 2281.39 942.70 C2284.13 942.70 2286.86 934.51 2289.59 934.51 C2292.32 934.51 2295.05 942.70 2297.79 942.70 C2312.54 942.70 2327.30 942.70 2342.05 942.70 C2343.96 942.70 2345.87 926.80 2347.79 926.80 C2348.88 926.80 2349.97 937.73 2351.07 943.20" fill="none" stroke="#fade2a" stroke-width="2" stroke-linejoin="round" stroke-linecap="round"/></svg><div class="t" style="top:799.77px;font-size:12.4px;color:#ccccdc;left:139.40px;width:1200px;text-align:right;">531 GiB</div><div class="t" style="top:848.07px;font-size:12.4px;color:#ccccdc;left:139.40px;width:1200px;text-align:right;">531 GiB</div><div class="t" style="top:896.07px;font-size:12.4px;color:#ccccdc;left:139.40px;width:1200px;text-align:right;">530 GiB</div><div class="t" style="top:944.07px;font-size:12.4px;color:#ccccdc;left:139.40px;width:1200px;text-align:right;">530 GiB</div><div class="t" style="top:944.27px;font-size:12.4px;color:#ccccdc;left:2380.30px;">0%</div><div class="t" style="top:910.53px;font-size:12.4px;color:#ccccdc;left:2380.30px;">20%</div><div class="t" style="top:876.79px;font-size:12.4px;color:#ccccdc;left:2380.30px;">40%</div><div class="t" style="top:843.05px;font-size:12.4px;color:#ccccdc;left:2380.30px;">60%</div><div class="t" style="top:809.31px;font-size:12.4px;color:#ccccdc;left:2380.30px;">80%</div><div class="t" style="top:775.57px;font-size:12.4px;color:#ccccdc;left:2380.30px;">100%</div><div class="t" style="top:793.37px;font-size:12.4px;color:#ccccdc;left:2420.90px;">6</div><div class="t" style="top:845.17px;font-size:12.4px;color:#ccccdc;left:2420.90px;">4</div><div class="t" style="top:897.57px;font-size:12.4px;color:#ccccdc;left:2420.90px;">2</div><div class="t" style="top:944.27px;font-size:12.4px;color:#ccccdc;left:2438.00px;">0 ms</div><div class="t" style="top:904.67px;font-size:12.4px;color:#ccccdc;left:2438.00px;">5 ms</div><div class="t" style="top:864.37px;font-size:12.4px;color:#ccccdc;left:2438.00px;">10 ms</div><div class="t" style="top:823.27px;font-size:12.4px;color:#ccccdc;left:2438.00px;">15 ms</div><div class="t" style="top:783.57px;font-size:12.4px;color:#ccccdc;left:2438.00px;">20 ms</div><div class="t" style="top:959.77px;font-size:12.4px;color:#ccccdc;left:781.10px;width:1200px;text-align:center;">07:30</div><div class="t" style="top:959.77px;font-size:12.4px;color:#ccccdc;left:866.95px;width:1200px;text-align:center;">08:00</div><div class="t" style="top:959.77px;font-size:12.4px;color:#ccccdc;left:952.80px;width:1200px;text-align:center;">08:30</div><div class="t" style="top:959.77px;font-size:12.4px;color:#ccccdc;left:1038.65px;width:1200px;text-align:center;">09:00</div><div class="t" style="top:959.77px;font-size:12.4px;color:#ccccdc;left:1124.50px;width:1200px;text-align:center;">09:30</div><div class="t" style="top:959.77px;font-size:12.4px;color:#ccccdc;left:1210.35px;width:1200px;text-align:center;">10:00</div><div class="t" style="top:959.77px;font-size:12.4px;color:#ccccdc;left:1296.20px;width:1200px;text-align:center;">10:30</div><div class="t" style="top:959.77px;font-size:12.4px;color:#ccccdc;left:1382.05px;width:1200px;text-align:center;">11:00</div><div class="t" style="top:959.77px;font-size:12.4px;color:#ccccdc;left:1467.90px;width:1200px;text-align:center;">11:30</div><div class="t" style="top:959.77px;font-size:12.4px;color:#ccccdc;left:1553.75px;width:1200px;text-align:center;">12:00</div><div class="t" style="top:959.77px;font-size:12.4px;color:#ccccdc;left:1639.60px;width:1200px;text-align:center;">12:30</div><div class="t" style="top:959.77px;font-size:12.4px;color:#ccccdc;left:1725.45px;width:1200px;text-align:center;">13:00</div><div class="t" style="left:1167.8px;top:859.8px;width:200px;height:14px;line-height:14px;text-align:center;font-size:12.4px;color:#ccccdc;transform:rotate(-90deg)">MB (frei)</div><div class="a" style="left:1265.9px;top:985.8px;width:14px;height:4px;border-radius:2px;background:#73bf69"></div><div class="t" style="top:981.33px;font-size:12.6px;color:#ccccdc;left:1288.20px;">Disk frei MB</div><div class="t" style="top:981.33px;font-size:12.6px;color:#ccccdc;left:1364.67px;">Last *: 531 GiB</div><div class="t" style="top:981.33px;font-size:12.6px;color:#ccccdc;left:1457.99px;">Max: 531 GiB</div><div class="t" style="top:981.33px;font-size:12.6px;color:#ccccdc;left:1542.89px;">Mean: 530 GiB</div><div class="a" style="left:1662.4px;top:985.8px;width:14px;height:4px;border-radius:2px;background:#ff9830"></div><div class="t" style="top:981.33px;font-size:12.6px;color:#ccccdc;left:1684.70px;">Disk belegt %</div><div class="t" style="top:981.33px;font-size:12.6px;color:#ccccdc;left:1770.30px;">Last *: 44%</div><div class="t" style="top:981.33px;font-size:12.6px;color:#ccccdc;left:1843.32px;">Max: 44%</div><div class="t" style="top:981.33px;font-size:12.6px;color:#ccccdc;left:1907.92px;">Mean: 44%</div><div class="a" style="left:1994.0px;top:985.8px;width:14px;height:4px;border-radius:2px;background:#b877d9"></div><div class="t" style="top:981.33px;font-size:12.6px;color:#ccccdc;left:2016.30px;">Load Avg</div><div class="t" style="top:981.33px;font-size:12.6px;color:#ccccdc;left:2077.20px;">Last *: 1.53</div><div class="t" style="top:981.33px;font-size:12.6px;color:#ccccdc;left:2149.52px;">Max: 6.08</div><div class="t" style="top:981.33px;font-size:12.6px;color:#ccccdc;left:2213.43px;">Mean: 2.04</div><div class="a" style="left:1662.4px;top:1009.4px;width:14px;height:4px;border-radius:2px;background:#fade2a"></div><div class="t" style="top:1004.93px;font-size:12.6px;color:#ccccdc;left:1684.70px;">Event Loop Lag</div><div class="t" style="top:1004.93px;font-size:12.6px;color:#ccccdc;left:1781.53px;">Last *: 1 ms</div><div class="t" style="top:1004.93px;font-size:12.6px;color:#ccccdc;left:1856.63px;">Max: 19 ms</div><div class="t" style="top:1004.93px;font-size:12.6px;color:#ccccdc;left:1930.33px;">Mean: 2.67 ms</div></div></body></html>
